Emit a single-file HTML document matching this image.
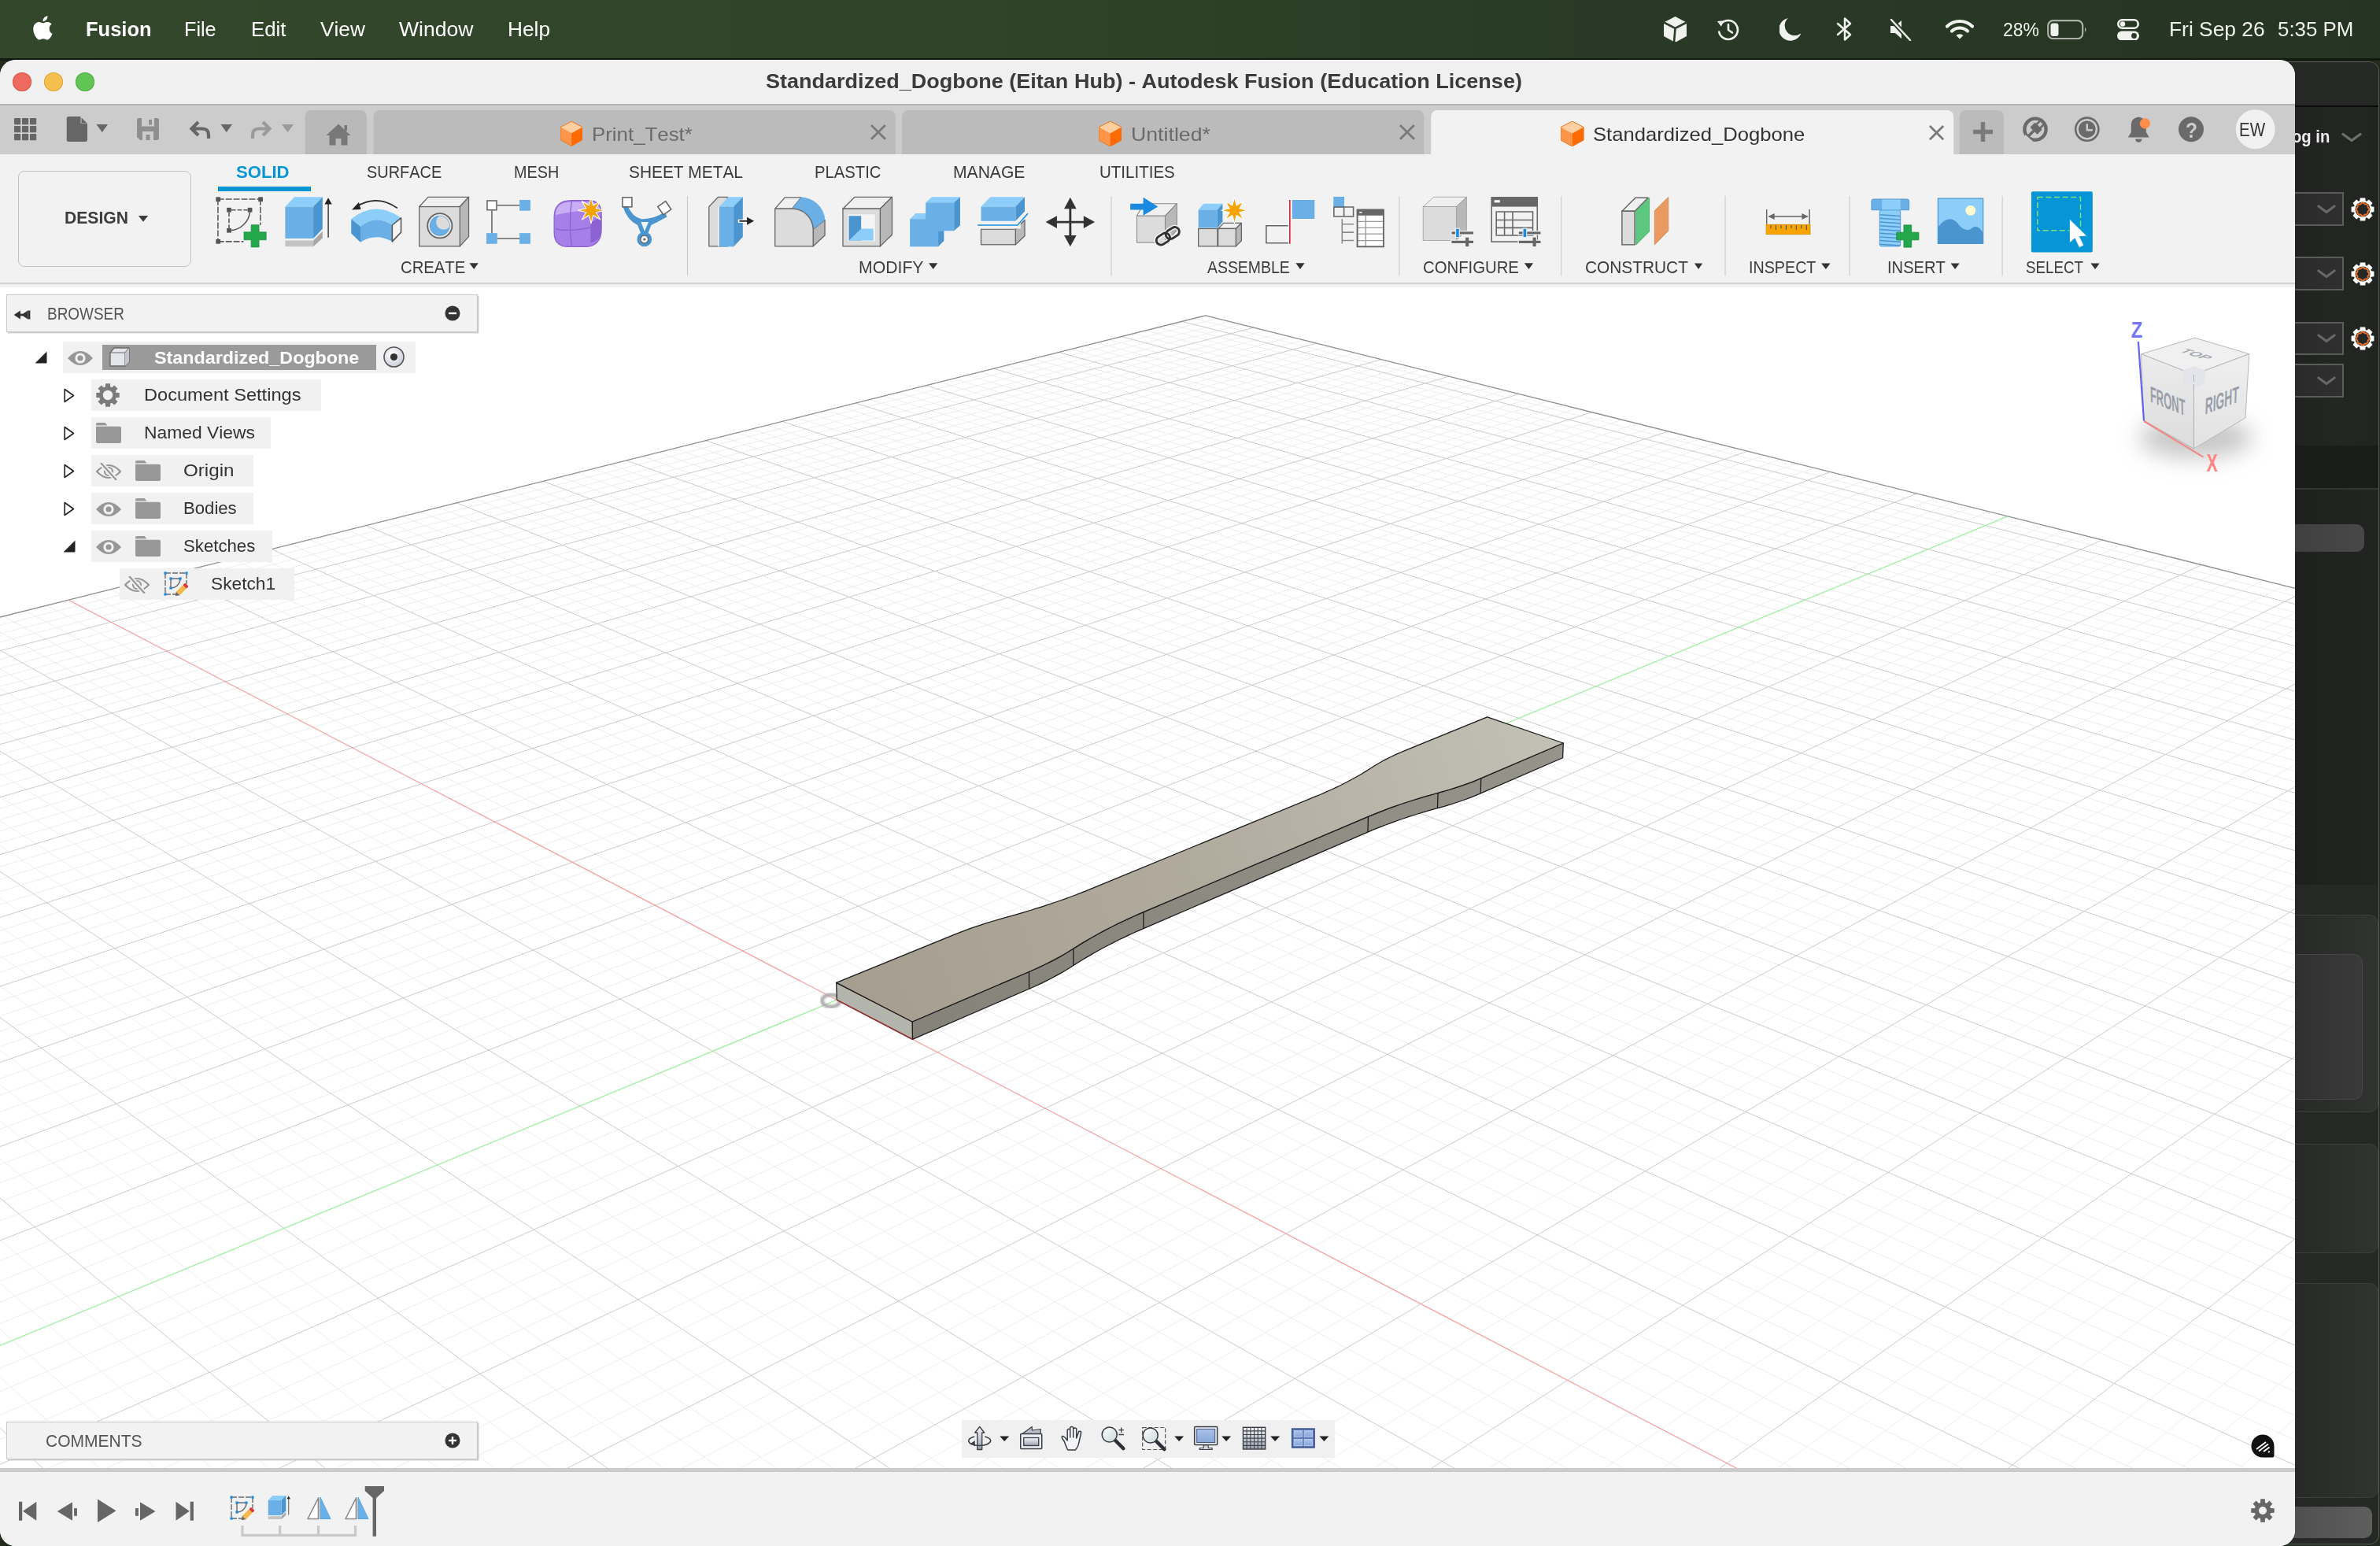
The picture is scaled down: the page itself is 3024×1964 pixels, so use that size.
<!DOCTYPE html><html><head><meta charset="utf-8"><title>Autodesk Fusion</title><style>
html,body{margin:0;padding:0}
body{width:3024px;height:1964px;overflow:hidden;background:#222b1c;position:relative;font-family:"Liberation Sans",sans-serif;font-kerning:none}
.t{position:absolute;white-space:pre;line-height:1;transform-origin:0 0;display:block}
#win{position:absolute;left:0;top:76px;width:2916px;height:1888px;border-radius:20px;overflow:hidden;background:#f2f2f2}
#rp{position:absolute;left:2890px;top:78px;width:133px;height:1884px;border-radius:0 12px 12px 0;overflow:hidden;background:linear-gradient(90deg,#1f211f 0%,#232623 60%,#222422 100%)}
</style></head><body><div class="" style="position:absolute;left:0.00px;top:0.00px;width:3024.00px;height:75.00px;background:linear-gradient(90deg,#33472b 0%,#2f4429 40%,#283a25 68%,#263523 100%)"></div><div class="" style="position:absolute;left:0.00px;top:74.00px;width:3024.00px;height:3.00px;background:#121a10"></div><svg style="position:absolute;left:39.50px;top:19.50px;" width="29.00" height="32.00" viewBox="0 1.5 22.5 29"><path d="M18.7 15.9c0-3.1 2.5-4.6 2.6-4.7-1.4-2.100-3.600-2.400-4.900-2.400-2.100-.2-4.100 1.200-5.100 1.200s-2.700-1.200-4.400-1.200c-2.300 0-4.400 1.300-5.600 3.400-2.400 4.100-.6 10.300 1.700 13.600 1.100 1.600 2.500 3.500 4.300 3.400 1.700-.1 2.400-1.100 4.400-1.100s2.700 1.100 4.500 1.100 3-1.700 4.100-3.300c1.300-1.900 1.800-3.700 1.900-3.800-.1 0-3.500-1.400-3.500-5.200zM15.300 6.100c.9-1.100 1.600-2.700 1.400-4.300-1.300.1-3 .9-4 2-.9 1-1.600 2.600-1.400 4.200 1.500.1 3-.8 4-1.900z" fill="#fff"/></svg><span class="t " style="left:109.00px;top:24.00px;font-size:26.00px;color:#fff;font-weight:700;transform:scaleX(0.9800);">Fusion</span><span class="t " style="left:234.40px;top:24.00px;font-size:26.00px;color:#fff;font-weight:400;transform:scaleX(0.9693);">File</span><span class="t " style="left:319.00px;top:24.00px;font-size:26.00px;color:#fff;font-weight:400;transform:scaleX(0.9911);">Edit</span><span class="t " style="left:406.60px;top:24.00px;font-size:26.00px;color:#fff;font-weight:400;transform:scaleX(1.0080);">View</span><span class="t " style="left:507.00px;top:24.00px;font-size:26.00px;color:#fff;font-weight:400;transform:scaleX(1.0223);">Window</span><span class="t " style="left:645.00px;top:24.00px;font-size:26.00px;color:#fff;font-weight:400;transform:scaleX(1.0097);">Help</span><svg style="position:absolute;left:2113.70px;top:20.60px;" width="29.00" height="32.90" viewBox="0 0 29 33"><path d="M14.5 0L29 7.5V25L14.5 33L0 25V7.5Z" fill="#f0f2ee"/><path d="M14.5 15L29 7.5M14.5 15L0 7.5M14.5 15L13 33" stroke="#2a3b27" stroke-width="2.6" fill="none"/><path d="M14.5 15L29 7.5V25L13.5 32.500Z" fill="#2a3b27" opacity=".0"/></svg><svg style="position:absolute;left:2180.00px;top:23.00px;" width="32.00" height="29.00" viewBox="0 0 32 29"><path d="M6.500 7.500A12 12 0 1 1 4.200 17.500" fill="none" stroke="#f0f2ee" stroke-width="2.6" stroke-linecap="round"/><path d="M1.500 4.500L7.500 10.500L9.500 2.800Z" fill="#f0f2ee" transform="rotate(8 6 7)"/><path d="M16 8V15L21 18.500" fill="none" stroke="#f0f2ee" stroke-width="2.600" stroke-linecap="round" stroke-linejoin="round"/></svg><svg style="position:absolute;left:2260.50px;top:23.00px;" width="27.70" height="28.60" viewBox="0 0 27.7 28.6"><path d="M11 0A14.500 14.500 0 1 0 27.500 19A12.500 12.500 0 0 1 11 0Z" fill="#f0f2ee"/></svg><svg style="position:absolute;left:2332.00px;top:21.00px;" width="24.00" height="32.00" viewBox="0 0 24 32"><path d="M3 9L19 23L12 29.500V2.500L19 9L3 23" fill="none" stroke="#f0f2ee" stroke-width="2.500" stroke-linejoin="round" stroke-linecap="round"/></svg><svg style="position:absolute;left:2400.00px;top:23.00px;" width="30.00" height="29.00" viewBox="0 0 30 29"><path d="M2 10H8L16 3V26L8 19H2Z" fill="#f0f2ee"/><path d="M3 2L27 28" stroke="#2a3b27" stroke-width="6"/><path d="M3 2L27 28" stroke="#f0f2ee" stroke-width="2.400" stroke-linecap="round"/></svg><svg style="position:absolute;left:2472.00px;top:24.00px;" width="36.00" height="26.00" viewBox="0 0 36 26"><path d="M2 9.500A23 23 0 0 1 34 9.500" fill="none" stroke="#f0f2ee" stroke-width="4.200" stroke-linecap="round"/><path d="M8 15.500A14.500 14.500 0 0 1 28 15.500" fill="none" stroke="#f0f2ee" stroke-width="4.200" stroke-linecap="round"/><path d="M13.500 21A6.500 6.500 0 0 1 22.500 21L18 25.600Z" fill="#f0f2ee"/></svg><span class="t " style="left:2544.90px;top:27.00px;font-size:23.50px;color:#f0f2ee;font-weight:400;transform:scaleX(0.9782);">28%</span><svg style="position:absolute;left:2601.00px;top:24.50px;" width="52.00" height="25.50" viewBox="0 0 52 25.500"><rect x="1.200" y="1.200" width="44" height="23" rx="6.500" fill="none" stroke="#a9b1a6" stroke-width="2.200"/><rect x="4.500" y="4.500" width="10" height="16.500" rx="3" fill="#f0f2ee"/><path d="M48 9.500Q51 12.700 48 16Z" fill="#a9b1a6"/></svg><svg style="position:absolute;left:2690.00px;top:23.50px;" width="28.00" height="27.50" viewBox="0 0 28 27.500"><rect x="1.300" y="1.300" width="25.400" height="10.400" rx="5.200" fill="none" stroke="#f0f2ee" stroke-width="2.600"/><circle cx="7" cy="6.500" r="3.200" fill="#f0f2ee"/><rect x="0" y="15.500" width="28" height="12" rx="6" fill="#f0f2ee"/><circle cx="21.500" cy="21.500" r="3.400" fill="#2a3b27"/></svg><span class="t " style="left:2755.50px;top:24.00px;font-size:26.00px;color:#f0f2ee;font-weight:400;transform:scaleX(1.0147);">Fri Sep 26</span><span class="t " style="left:2893.90px;top:24.00px;font-size:26.00px;color:#f0f2ee;font-weight:400;transform:scaleX(0.9956);">5:35 PM</span><div id="rp"><div class="" style="position:absolute;left:0.00px;top:0.00px;width:140.00px;height:57.00px;background:#262826"></div><div class="" style="position:absolute;left:0.00px;top:56.00px;width:140.00px;height:1.60px;background:#0a0a0a"></div><div class="" style="position:absolute;left:0.00px;top:487.70px;width:140.00px;height:55.00px;background:#1b1d1b"></div><div class="" style="position:absolute;left:0.00px;top:542.00px;width:140.00px;height:1.60px;background:#343634"></div><div class="" style="position:absolute;left:0.00px;top:543.60px;width:140.00px;height:502.00px;background:linear-gradient(90deg,#1e201e,#222422)"></div><div class="" style="position:absolute;left:0.00px;top:1045.70px;width:140.00px;height:850.00px;background:#262826"></div><span class="t " style="left:22.10px;top:85.00px;font-size:22.40px;color:#ececec;font-weight:700;transform:scaleX(0.9030);">og in</span><svg style="position:absolute;left:85.00px;top:90.00px;" width="26.00" height="14.00" viewBox="0 0 26 14"><path d="M2 2.500L13 10.500L24 2.500" fill="none" stroke="#6e706e" stroke-width="3.4" stroke-linecap="round" stroke-linejoin="round"/></svg><div class="" style="position:absolute;left:-10.00px;top:166.40px;width:97.60px;height:43.00px;box-sizing:border-box;border:2px solid #5a5c5a;background:linear-gradient(90deg,#262826,#2f2f2f)"></div><svg style="position:absolute;left:54.00px;top:181.90px;" width="24.00" height="13.00" viewBox="0 0 24 13"><path d="M2 2L12 9.500L22 2" fill="none" stroke="#676967" stroke-width="3.2" stroke-linecap="round" stroke-linejoin="round"/></svg><div class="" style="position:absolute;left:-10.00px;top:248.20px;width:97.60px;height:42.80px;box-sizing:border-box;border:2px solid #5a5c5a;background:linear-gradient(90deg,#262826,#2f2f2f)"></div><svg style="position:absolute;left:54.00px;top:263.60px;" width="24.00" height="13.00" viewBox="0 0 24 13"><path d="M2 2L12 9.500L22 2" fill="none" stroke="#676967" stroke-width="3.2" stroke-linecap="round" stroke-linejoin="round"/></svg><div class="" style="position:absolute;left:-10.00px;top:330.50px;width:97.60px;height:42.70px;box-sizing:border-box;border:2px solid #5a5c5a;background:linear-gradient(90deg,#262826,#2f2f2f)"></div><svg style="position:absolute;left:54.00px;top:345.85px;" width="24.00" height="13.00" viewBox="0 0 24 13"><path d="M2 2L12 9.500L22 2" fill="none" stroke="#676967" stroke-width="3.2" stroke-linecap="round" stroke-linejoin="round"/></svg><div class="" style="position:absolute;left:-10.00px;top:384.00px;width:97.60px;height:43.00px;box-sizing:border-box;border:2px solid #5a5c5a;background:linear-gradient(90deg,#262826,#2f2f2f)"></div><svg style="position:absolute;left:54.00px;top:399.50px;" width="24.00" height="13.00" viewBox="0 0 24 13"><path d="M2 2L12 9.500L22 2" fill="none" stroke="#676967" stroke-width="3.2" stroke-linecap="round" stroke-linejoin="round"/></svg><svg style="position:absolute;left:97.00px;top:173.00px;" width="30.00" height="30.00" viewBox="0 0 30 30"><path d="M25.88 11.27L29.44 11.77L29.44 18.23L25.88 18.73L25.33 20.06L27.50 22.93L22.93 27.50L20.06 25.33L18.73 25.88L18.23 29.44L11.77 29.44L11.27 25.88L9.94 25.33L7.07 27.50L2.50 22.93L4.67 20.06L4.12 18.73L0.56 18.23L0.56 11.77L4.12 11.27L4.67 9.94L2.50 7.07L7.07 2.50L9.94 4.67L11.27 4.12L11.77 0.56L18.23 0.56L18.73 4.12L20.06 4.67L22.93 2.50L27.50 7.07L25.33 9.94Z" fill="#fff" stroke="none" stroke-width="0" /><circle cx="15" cy="15" r="9.6" fill="#262826" stroke="none" stroke-width="0" /><path d="M21.88 12.87L23.04 13.37L23.04 16.63L21.88 17.13L21.37 18.36L21.83 19.53L19.53 21.83L18.36 21.37L17.13 21.88L16.63 23.04L13.37 23.04L12.87 21.88L11.64 21.37L10.47 21.83L8.17 19.53L8.63 18.36L8.12 17.13L6.96 16.63L6.96 13.37L8.12 12.87L8.63 11.64L8.17 10.47L10.47 8.17L11.64 8.63L12.87 8.12L13.37 6.96L16.63 6.96L17.13 8.12L18.36 8.63L19.53 8.17L21.83 10.47L21.37 11.64Z" fill="none" stroke="#e87028" stroke-width="1.8" stroke-linejoin="round"/></svg><svg style="position:absolute;left:97.00px;top:254.60px;" width="30.00" height="30.00" viewBox="0 0 30 30"><path d="M25.88 11.27L29.44 11.77L29.44 18.23L25.88 18.73L25.33 20.06L27.50 22.93L22.93 27.50L20.06 25.33L18.73 25.88L18.23 29.44L11.77 29.44L11.27 25.88L9.94 25.33L7.07 27.50L2.50 22.93L4.67 20.06L4.12 18.73L0.56 18.23L0.56 11.77L4.12 11.27L4.67 9.94L2.50 7.07L7.07 2.50L9.94 4.67L11.27 4.12L11.77 0.56L18.23 0.56L18.73 4.12L20.06 4.67L22.93 2.50L27.50 7.07L25.33 9.94Z" fill="#fff" stroke="none" stroke-width="0" /><circle cx="15" cy="15" r="9.6" fill="#262826" stroke="none" stroke-width="0" /><path d="M21.88 12.87L23.04 13.37L23.04 16.63L21.88 17.13L21.37 18.36L21.83 19.53L19.53 21.83L18.36 21.37L17.13 21.88L16.63 23.04L13.37 23.04L12.87 21.88L11.64 21.37L10.47 21.83L8.17 19.53L8.63 18.36L8.12 17.13L6.96 16.63L6.96 13.37L8.12 12.87L8.63 11.64L8.17 10.47L10.47 8.17L11.64 8.63L12.87 8.12L13.37 6.96L16.63 6.96L17.13 8.12L18.36 8.63L19.53 8.17L21.83 10.47L21.37 11.64Z" fill="none" stroke="#e87028" stroke-width="1.8" stroke-linejoin="round"/></svg><svg style="position:absolute;left:97.00px;top:336.50px;" width="30.00" height="30.00" viewBox="0 0 30 30"><path d="M25.88 11.27L29.44 11.77L29.44 18.23L25.88 18.73L25.33 20.06L27.50 22.93L22.93 27.50L20.06 25.33L18.73 25.88L18.23 29.44L11.77 29.44L11.27 25.88L9.94 25.33L7.07 27.50L2.50 22.93L4.67 20.06L4.12 18.73L0.56 18.23L0.56 11.77L4.12 11.27L4.67 9.94L2.50 7.07L7.07 2.50L9.94 4.67L11.27 4.12L11.77 0.56L18.23 0.56L18.73 4.12L20.06 4.67L22.93 2.50L27.50 7.07L25.33 9.94Z" fill="#fff" stroke="none" stroke-width="0" /><circle cx="15" cy="15" r="9.6" fill="#262826" stroke="none" stroke-width="0" /><path d="M21.88 12.87L23.04 13.37L23.04 16.63L21.88 17.13L21.37 18.36L21.83 19.53L19.53 21.83L18.36 21.37L17.13 21.88L16.63 23.04L13.37 23.04L12.87 21.88L11.64 21.37L10.47 21.83L8.17 19.53L8.63 18.36L8.12 17.13L6.96 16.63L6.96 13.37L8.12 12.87L8.63 11.64L8.17 10.47L10.47 8.17L11.64 8.63L12.87 8.12L13.37 6.96L16.63 6.96L17.13 8.12L18.36 8.63L19.53 8.17L21.83 10.47L21.37 11.64Z" fill="none" stroke="#e87028" stroke-width="1.8" stroke-linejoin="round"/></svg><div class="" style="position:absolute;left:-10.00px;top:588.00px;width:124.00px;height:34.50px;border-radius:10px;background:linear-gradient(90deg,#3c3c3c,#484848)"></div><div class="" style="position:absolute;left:-20.00px;top:1083.80px;width:152.40px;height:251.20px;box-sizing:border-box;border:1.500px solid #3c3e3c;border-radius:11px;background:linear-gradient(90deg,#242624,#313331)"></div><div class="" style="position:absolute;left:-20.00px;top:1134.20px;width:131.70px;height:185.30px;box-sizing:border-box;border:1.500px solid #454645;border-radius:11px;background:linear-gradient(90deg,#2a2b2a,#3a3a3a)"></div><div class="" style="position:absolute;left:-20.00px;top:1374.50px;width:152.40px;height:139.50px;box-sizing:border-box;border:1.500px solid #3c3e3c;border-radius:11px;background:linear-gradient(90deg,#242624,#313331)"></div><div class="" style="position:absolute;left:-20.00px;top:1551.90px;width:152.40px;height:273.50px;box-sizing:border-box;border:1.500px solid #3c3e3c;border-radius:11px;background:linear-gradient(90deg,#242624,#313331)"></div><div class="" style="position:absolute;left:-10.00px;top:1836.00px;width:133.80px;height:39.70px;border-radius:10px;background:linear-gradient(90deg,#4a4a4a,#5e5e5e)"></div><div style="position:absolute;left:0;top:0;width:133px;height:1884px;box-sizing:border-box;border:1.600px solid #585a58;border-left:none;border-radius:0 12px 12px 0"></div></div><div id="win"><div class="" style="position:absolute;left:0.00px;top:0.00px;width:2916.00px;height:57.00px;background:#f0f0f0"></div><div class="" style="position:absolute;left:0.00px;top:56.00px;width:2916.00px;height:2.00px;background:#b4b4b4"></div><div class="" style="position:absolute;left:16.00px;top:16.00px;width:24.00px;height:24.00px;border-radius:50%;background:#ec6a5e;box-shadow:inset 0 0 0 1px #d9584c"></div><div class="" style="position:absolute;left:56.00px;top:16.00px;width:24.00px;height:24.00px;border-radius:50%;background:#f4bf4f;box-shadow:inset 0 0 0 1px #dba73a"></div><div class="" style="position:absolute;left:96.00px;top:16.00px;width:24.00px;height:24.00px;border-radius:50%;background:#61c554;box-shadow:inset 0 0 0 1px #4dae3f"></div><span class="t " style="left:972.70px;top:14.00px;font-size:26.00px;color:#3b3b3b;font-weight:700;transform:scaleX(1.0394);">Standardized_Dogbone (Eitan Hub) - Autodesk Fusion (Education License)</span><div class="" style="position:absolute;left:0.00px;top:58.00px;width:2916.00px;height:62.00px;background:#cccccc"></div><svg style="position:absolute;left:0.00px;top:58.00px;" width="2916.00" height="62.00" viewBox="0 134 2916 62"><rect x="18" y="150" width="8.2" height="8.2" rx="1" fill="#666" stroke="none" stroke-width="0" /><rect x="28" y="150" width="8.2" height="8.2" rx="1" fill="#666" stroke="none" stroke-width="0" /><rect x="38" y="150" width="8.2" height="8.2" rx="1" fill="#666" stroke="none" stroke-width="0" /><rect x="18" y="160" width="8.2" height="8.2" rx="1" fill="#666" stroke="none" stroke-width="0" /><rect x="28" y="160" width="8.2" height="8.2" rx="1" fill="#666" stroke="none" stroke-width="0" /><rect x="38" y="160" width="8.2" height="8.2" rx="1" fill="#666" stroke="none" stroke-width="0" /><rect x="18" y="170" width="8.2" height="8.2" rx="1" fill="#666" stroke="none" stroke-width="0" /><rect x="28" y="170" width="8.2" height="8.2" rx="1" fill="#666" stroke="none" stroke-width="0" /><rect x="38" y="170" width="8.2" height="8.2" rx="1" fill="#666" stroke="none" stroke-width="0" /><path d="M87 148H102L111 157V177.500Q111 180 108.500 180H87Q84.700 180 84.700 177.500V150.500Q84.700 148 87 148Z" fill="#666" stroke="none" stroke-width="0" /><path d="M102.500 148L111 156.500H102.500Z" fill="#ccc" stroke="none" stroke-width="0" /><path d="M103.500 149.500V156H110Z" fill="#666" stroke="none" stroke-width="0" /><polygon points="122.5,158 137,158 129.75,168" fill="#666" stroke="none" stroke-width="0" /><path d="M176 150H199Q202 150 202 153V175Q202 178 199 178H178L174 174V152Q174 150 176 150Z" fill="#8f8f8f" stroke="none" stroke-width="0" /><rect x="180" y="150" width="16" height="10.5" rx="0" fill="#ccc" stroke="none" stroke-width="0" /><rect x="189" y="152" width="4" height="6.5" rx="0" fill="#8f8f8f" stroke="none" stroke-width="0" /><rect x="181" y="167" width="14" height="11" rx="0" fill="#ccc" stroke="none" stroke-width="0" /><rect x="185.5" y="171" width="5" height="7" rx="0" fill="#8f8f8f" stroke="none" stroke-width="0" /><path d="M252 155L243.500 163.500L252 172M244 163.500H257Q265 163.500 265 171.500V176" fill="none" stroke="#666" stroke-width="4.2" stroke-linejoin="miter"/><polygon points="280.5,158 295,158 287.75,168" fill="#666" stroke="none" stroke-width="0" /><path d="M334 155L342.500 163.500L334 172M342 163.500H329Q321 163.500 321 171.500V176" fill="none" stroke="#9a9a9a" stroke-width="4.2" /><polygon points="358,158 373,158 365.5,168" fill="#9a9a9a" stroke="none" stroke-width="0" /><path d="M387.600 196V149Q387.600 140 396.600 140H457Q466 140 466 149V196Z" fill="#b9b9b9" stroke="none" stroke-width="0" /><path d="M430 157.500L445.500 172H441.500V184.500H433.500V176H426.500V184.500H418.500V172H414.500Z" fill="#787878" stroke="none" stroke-width="0" /><rect x="437.5" y="159" width="3.5" height="7" rx="0" fill="#787878" stroke="none" stroke-width="0" /><path d="M474.6 196V149Q474.6 140 483.6 140H1128.8Q1137.8 140 1137.8 149V196Z" fill="#bbbbbb" stroke="none" stroke-width="0" /><path d="M1146.1 196V149Q1146.1 140 1155.1 140H1800.3Q1809.3 140 1809.3 149V196Z" fill="#bbbbbb" stroke="none" stroke-width="0" /><path d="M1818.2 196V149Q1818.2 140 1827.2 140H2473.2Q2482.2 140 2482.2 149V196Z" fill="#f2f2f2" stroke="none" stroke-width="0" /><path d="M2489.8 196V149Q2489.8 140 2498.8 140H2537Q2546 140 2546 149V196Z" fill="#bbbbbb" stroke="none" stroke-width="0" /><path d="M2519.500 155V180M2507 167.500H2532" fill="none" stroke="#7a7a7a" stroke-width="5.4" /><circle cx="2586" cy="164.2" r="13.6" fill="none" stroke="#6a6a6a" stroke-width="4.4" /><g transform="translate(2586,164.2) rotate(45)"><rect x="-6.5" y="-6" width="13" height="9" rx="1.5" fill="#6a6a6a" stroke="none" stroke-width="0" /><rect x="-4.6" y="-11" width="2.6" height="6" rx="0" fill="#6a6a6a" stroke="none" stroke-width="0" /><rect x="2" y="-11" width="2.6" height="6" rx="0" fill="#6a6a6a" stroke="none" stroke-width="0" /><rect x="-1.8" y="3" width="3.6" height="9" rx="0" fill="#6a6a6a" stroke="none" stroke-width="0" /></g><path d="M2572 173.2L2581 181.2" fill="none" stroke="#ccc" stroke-width="5" /><circle cx="2651.8" cy="164.2" r="14.6" fill="none" stroke="#6a6a6a" stroke-width="2.6" /><circle cx="2651.8" cy="164.2" r="10.8" fill="#6a6a6a" stroke="none" stroke-width="0" /><path d="M2651.8 157.2V165.2H2658.8" fill="none" stroke="#ccc" stroke-width="2.4" /><path d="M2717.3 148.500Q2707.8 150 2707.8 158V168L2703.8 174.500H2730.8L2726.8 168V158Q2726.8 150 2717.3 148.500Z" fill="#6a6a6a" stroke="none" stroke-width="0" /><path d="M2713.1 176.500A4.200 4.200 0 0 0 2721.5 176.500Z" fill="#6a6a6a" stroke="none" stroke-width="0" /><circle cx="2725.4" cy="156.8" r="6.6" fill="#ff8c4a" stroke="none" stroke-width="0" /><circle cx="2784" cy="164.2" r="16" fill="#6a6a6a" stroke="none" stroke-width="0" /><circle cx="2865.7" cy="164.2" r="25" fill="#f1f1f1" stroke="none" stroke-width="0" /></svg><span class="t " style="left:2776.50px;top:76.00px;font-size:28.00px;color:#ccc;font-weight:700;transform:scaleX(0.8768);">?</span><span class="t " style="left:2844.90px;top:77.00px;font-size:24.00px;color:#333;font-weight:400;transform:scaleX(0.8561);">EW</span><svg style="position:absolute;left:711.80px;top:78.40px;" width="28.30" height="31.60" viewBox="0 0 29 32"><path d="M14.500 0L29 7.500L14.500 15.500L0 7.500Z" fill="#ffcf9f"/><path d="M0 7.500L14.500 15.500V32L0 24Z" fill="#ff9548"/><path d="M29 7.500L14.500 15.500V32L29 24Z" fill="#ff6a00"/><path d="M14.500 0L29 7.500V24L14.500 32L0 24V7.500Z" fill="none" stroke="#e8761e" stroke-width="1"/></svg><span class="t " style="left:752.10px;top:83.00px;font-size:24.30px;color:#6a6a6a;font-weight:400;transform:scaleX(1.0639);">Print_Test*</span><svg style="position:absolute;left:1104.70px;top:81.40px;" width="21.80" height="21.80" viewBox="0 0 21.8 21.8"><path d="M2 2L19.8 19.8M19.8 2L2 19.8" stroke="#7a7a7a" stroke-width="2.800" fill="none"/></svg><svg style="position:absolute;left:1395.50px;top:78.00px;" width="29.20" height="32.00" viewBox="0 0 29 32"><path d="M14.500 0L29 7.500L14.500 15.500L0 7.500Z" fill="#ffcf9f"/><path d="M0 7.500L14.500 15.500V32L0 24Z" fill="#ff9548"/><path d="M29 7.500L14.500 15.500V32L29 24Z" fill="#ff6a00"/><path d="M14.500 0L29 7.500V24L14.500 32L0 24V7.500Z" fill="none" stroke="#e8761e" stroke-width="1"/></svg><span class="t " style="left:1436.50px;top:83.00px;font-size:24.30px;color:#6a6a6a;font-weight:400;transform:scaleX(1.0985);">Untitled*</span><svg style="position:absolute;left:1776.80px;top:81.40px;" width="21.80" height="21.80" viewBox="0 0 21.8 21.8"><path d="M2 2L19.8 19.8M19.8 2L2 19.8" stroke="#7a7a7a" stroke-width="2.800" fill="none"/></svg><svg style="position:absolute;left:1983.40px;top:78.00px;" width="29.20" height="32.00" viewBox="0 0 29 32"><path d="M14.500 0L29 7.500L14.500 15.500L0 7.500Z" fill="#ffcf9f"/><path d="M0 7.500L14.500 15.500V32L0 24Z" fill="#ff9548"/><path d="M29 7.500L14.500 15.500V32L29 24Z" fill="#ff6a00"/><path d="M14.500 0L29 7.500V24L14.500 32L0 24V7.500Z" fill="none" stroke="#e8761e" stroke-width="1"/></svg><span class="t " style="left:2024.00px;top:83.00px;font-size:24.30px;color:#333;font-weight:400;transform:scaleX(1.0550);">Standardized_Dogbone</span><svg style="position:absolute;left:2449.50px;top:81.90px;" width="21.20" height="21.20" viewBox="0 0 21.2 21.2"><path d="M2 2L19.2 19.2M19.2 2L2 19.2" stroke="#7a7a7a" stroke-width="2.800" fill="none"/></svg><div class="" style="position:absolute;left:0.00px;top:120.00px;width:2916.00px;height:164.00px;background:#f2f2f2"></div><div class="" style="position:absolute;left:0.00px;top:283.00px;width:2916.00px;height:1.50px;background:#d2d2d2"></div><div class="" style="position:absolute;left:0.00px;top:284.50px;width:2916.00px;height:5.30px;background:#f0f0f0"></div><div class="" style="position:absolute;left:23.30px;top:141.40px;width:219.30px;height:121.20px;box-sizing:border-box;border:1.600px solid #c2c2c2;border-radius:8px;background:#f2f2f2"></div><span class="t " style="left:82.40px;top:190.00px;font-size:22.50px;color:#3c3c3c;font-weight:700;transform:scaleX(0.9378);">DESIGN</span><span class="t " style="left:300.00px;top:132.00px;font-size:22.50px;color:#0696d7;font-weight:700;transform:scaleX(0.9831);">SOLID</span><span class="t " style="left:466.30px;top:132.00px;font-size:22.50px;color:#3a3a3a;font-weight:400;transform:scaleX(0.8855);">SURFACE</span><span class="t " style="left:652.50px;top:132.00px;font-size:22.50px;color:#3a3a3a;font-weight:400;transform:scaleX(0.8800);">MESH</span><span class="t " style="left:798.60px;top:132.00px;font-size:22.50px;color:#3a3a3a;font-weight:400;transform:scaleX(0.9273);">SHEET METAL</span><span class="t " style="left:1035.00px;top:132.00px;font-size:22.50px;color:#3a3a3a;font-weight:400;transform:scaleX(0.9000);">PLASTIC</span><span class="t " style="left:1211.00px;top:132.00px;font-size:22.50px;color:#3a3a3a;font-weight:400;transform:scaleX(0.9373);">MANAGE</span><span class="t " style="left:1397.00px;top:132.00px;font-size:22.50px;color:#3a3a3a;font-weight:400;transform:scaleX(0.9121);">UTILITIES</span><div class="" style="position:absolute;left:277.00px;top:161.00px;width:118.00px;height:6.30px;background:#0696d7"></div><span class="t " style="left:508.80px;top:254.00px;font-size:21.50px;color:#3c3c3c;font-weight:400;transform:scaleX(0.9426);">CREATE</span><span class="t " style="left:1090.50px;top:254.00px;font-size:21.50px;color:#3c3c3c;font-weight:400;transform:scaleX(0.9867);">MODIFY</span><span class="t " style="left:1533.90px;top:254.00px;font-size:21.50px;color:#3c3c3c;font-weight:400;transform:scaleX(0.9033);">ASSEMBLE</span><span class="t " style="left:1807.90px;top:254.00px;font-size:21.50px;color:#3c3c3c;font-weight:400;transform:scaleX(0.9450);">CONFIGURE</span><span class="t " style="left:2014.10px;top:254.00px;font-size:21.50px;color:#3c3c3c;font-weight:400;transform:scaleX(0.9699);">CONSTRUCT</span><span class="t " style="left:2222.00px;top:254.00px;font-size:21.50px;color:#3c3c3c;font-weight:400;transform:scaleX(0.9165);">INSPECT</span><span class="t " style="left:2398.00px;top:254.00px;font-size:21.50px;color:#3c3c3c;font-weight:400;transform:scaleX(0.9369);">INSERT</span><span class="t " style="left:2573.50px;top:254.00px;font-size:21.50px;color:#3c3c3c;font-weight:400;transform:scaleX(0.8728);">SELECT</span><svg style="position:absolute;left:0.00px;top:120.00px;" width="2916.00" height="170.00" viewBox="0 196 2916 170"><g transform="translate(260,230) scale(0.260505)"><path d="M65 88H272M65 88V295M272 88V215M65 295H190" fill="none" stroke="#5a5a5a" stroke-width="6" stroke-dasharray="30 8"/><rect x="55" y="78" width="22" height="22" rx="0" fill="#555" stroke="none" stroke-width="0" /><rect x="262" y="78" width="22" height="22" rx="0" fill="#555" stroke="none" stroke-width="0" /><rect x="55" y="284" width="22" height="22" rx="0" fill="#555" stroke="none" stroke-width="0" /><path d="M130 141H210M119 152V230" fill="none" stroke="#5a5a5a" stroke-width="6" stroke-dasharray="22 8"/><path d="M221 150A102 102 0 0 1 128 241" fill="none" stroke="#5a5a5a" stroke-width="6" /><rect x="108" y="130" width="22" height="22" rx="0" fill="#555" stroke="none" stroke-width="0" /><rect x="210" y="130" width="22" height="22" rx="0" fill="#555" stroke="none" stroke-width="0" /><rect x="108" y="230" width="22" height="22" rx="0" fill="#555" stroke="none" stroke-width="0" /><polygon points="227,214 265,214 265,249 300,249 300,287 265,287 265,322 227,322 227,287 192,287 192,249 227,249" fill="#22a84a" stroke="#1d8f3e" stroke-width="3" /><polygon points="393,290 530,290 530,320 393,320" fill="#c4c4c4" stroke="none" stroke-width="0" /><polygon points="530,290 575,245 575,278 530,320" fill="#a8a8a8" stroke="none" stroke-width="0" /><polygon points="393,125 438,78 575,78 530,125" fill="#8ccdfa" stroke="none" stroke-width="0" /><polygon points="530,125 575,78 575,233 530,280" fill="#4a95cf" stroke="none" stroke-width="0" /><rect x="393" y="125" width="137" height="155" rx="0" fill="#6ab0e6" stroke="none" stroke-width="0" /><line x1="603" y1="275" x2="603" y2="105" stroke="#222" stroke-width="5" /><polygon points="585,113 603,82 621,113" fill="#222" stroke="none" stroke-width="0" /><path d="M940 132Q840 62 738 126" fill="none" stroke="#222" stroke-width="6" /><polygon points="718,140 752,104 762,138" fill="#222" stroke="none" stroke-width="0" /><path d="M715 185Q835 90 958 180L915 215Q835 160 760 222Z" fill="#8ccdfa" stroke="none" stroke-width="0" /><path d="M760 222Q835 160 915 215L915 295Q835 250 760 298Z" fill="#6ab0e6" stroke="none" stroke-width="0" /><polygon points="715,185 760,222 760,298 715,255" fill="#4a95cf" stroke="none" stroke-width="0" /><polygon points="915,215 958,180 958,250 915,295" fill="#f4f4f4" stroke="#555" stroke-width="6" stroke-linejoin="round"/><polygon points="1047,125 1090,78 1288,78 1245,125" fill="#f0f0f0" stroke="#666" stroke-width="5" stroke-linejoin="round"/><polygon points="1245,125 1288,78 1288,271 1245,318" fill="#b8b8b8" stroke="#666" stroke-width="5" stroke-linejoin="round"/><rect x="1047" y="125" width="198" height="193" rx="0" fill="#dcdcdc" stroke="#666" stroke-width="5" /><circle cx="1147" cy="218" r="60" fill="#e6e6e6" stroke="#666" stroke-width="7" /><circle cx="1147" cy="218" r="48" fill="#6ab0e6" stroke="#4a95cf" stroke-width="3" /><clipPath id="hc"><circle cx="1147" cy="218" r="47"/></clipPath><circle cx="1166" cy="200" r="37" fill="#dcdcdc" stroke="none" stroke-width="0" clip-path="url(#hc)"/><path d="M1427 118H1537M1401 143V255M1427 280H1537" fill="none" stroke="#666" stroke-width="6" /><rect x="1378" y="96" width="46" height="45" rx="0" fill="#fff" stroke="#666" stroke-width="6" /><rect x="1537" y="93" width="51" height="50" rx="0" fill="#6ab0e6" stroke="#5aa5de" stroke-width="2" /><rect x="1375" y="255" width="51" height="50" rx="0" fill="#6ab0e6" stroke="#5aa5de" stroke-width="2" /><rect x="1537" y="255" width="51" height="50" rx="0" fill="#6ab0e6" stroke="#5aa5de" stroke-width="2" /><path d="M1705 175Q1705 95 1790 95L1870 95Q1935 95 1935 160L1935 235Q1935 320 1850 320L1775 320Q1705 320 1705 250Z" fill="#a77fe8" stroke="#8c62d2" stroke-width="5" /><path d="M1712 165Q1712 102 1790 102L1870 102Q1928 102 1928 150Q1850 135 1712 165Z" fill="#c9aef5" stroke="none" stroke-width="0" /><path d="M1712 235Q1800 250 1925 215M1790 100Q1775 200 1790 315M1885 200V300" fill="none" stroke="#8c62d2" stroke-width="5" /><path d="M1885 200Q1935 180 1935 160L1935 235Q1935 290 1885 300Z" fill="#8c62d2" stroke="none" stroke-width="0" /><polygon points="1885,79 1894.95,118.979 1930.25,97.7452 1909.02,133.05 1949,143 1909.02,152.95 1930.25,188.255 1894.95,167.021 1885,207 1875.05,167.021 1839.75,188.255 1860.98,152.95 1821,143 1860.98,133.05 1839.75,97.7452 1875.05,118.979" fill="#f7a400" stroke="#fff" stroke-width="4" stroke-linejoin="round"/><path d="M2062 118Q2085 175 2130 185Q2190 188 2245 150L2255 175Q2200 205 2178 215L2160 262H2130L2112 215Q2060 190 2040 125Z" fill="#4a95cf" stroke="none" stroke-width="0" /><polygon points="2128,200 2165,200 2146,245" fill="#f2f2f2" stroke="none" stroke-width="0" /><circle cx="2145" cy="284" r="36" fill="#4a95cf" stroke="none" stroke-width="0" /><circle cx="2145" cy="284" r="19" fill="#f2f2f2" stroke="#666" stroke-width="5" /><circle cx="2145" cy="284" r="6" fill="#666" stroke="none" stroke-width="0" /><rect x="2038" y="80" width="46" height="46" rx="0" fill="#fff" stroke="#666" stroke-width="6" /><polygon points="2210,125 2248,98 2276,138 2238,165" fill="#fff" stroke="#666" stroke-width="6" stroke-linejoin="round"/><line x1="2355" y1="75" x2="2355" y2="462" stroke="#c8c8c8" stroke-width="4" /><polygon points="1292,400 1335,400 1313.5,430" fill="#333" stroke="none" stroke-width="0" /></g><g transform="translate(880,230) scale(0.260505)"><polygon points="80,125 125,78 170,78 170,318 80,318" fill="#dcdcdc" stroke="#666" stroke-width="5" stroke-linejoin="round"/><polygon points="130,125 175,78 245,78 200,125" fill="#8ccdfa" stroke="none" stroke-width="0" /><polygon points="200,125 245,78 245,273 200,320" fill="#4a95cf" stroke="none" stroke-width="0" /><rect x="130" y="125" width="70" height="195" rx="0" fill="#6ab0e6" stroke="none" stroke-width="0" /><line x1="126" y1="128" x2="126" y2="320" stroke="#f2f2f2" stroke-width="5" /><line x1="222" y1="195" x2="272" y2="195" stroke="#fff" stroke-width="16" /><line x1="228" y1="195" x2="272" y2="195" stroke="#222" stroke-width="7" /><polygon points="265,176 300,195 265,214" fill="#222" stroke="none" stroke-width="0" /><polygon points="402,135 450,80 530,80 485,135" fill="#f0f0f0" stroke="#666" stroke-width="5" stroke-linejoin="round"/><polygon points="588,235 645,190 645,265 588,318" fill="#b8b8b8" stroke="#666" stroke-width="5" stroke-linejoin="round"/><path d="M485 135L530 80A118 118 0 0 1 645 190L588 235A102 102 0 0 0 485 135Z" fill="#6ab0e6" stroke="#5aa5de" stroke-width="2" /><path d="M402 135L485 135A102 102 0 0 1 588 235L588 318L402 318Z" fill="#dcdcdc" stroke="#666" stroke-width="5" stroke-linejoin="round"/><polygon points="733,135 791,78 973,78 915,135" fill="#f0f0f0" stroke="#666" stroke-width="5" stroke-linejoin="round"/><polygon points="915,135 973,78 973,261 915,318" fill="#b8b8b8" stroke="#666" stroke-width="5" stroke-linejoin="round"/><rect x="733" y="135" width="182" height="183" rx="0" fill="#dcdcdc" stroke="#666" stroke-width="5" /><rect x="757" y="162" width="133" height="131" rx="0" fill="#f4f4f4" stroke="none" stroke-width="0" /><rect x="762" y="170" width="60" height="120" rx="0" fill="#4a95cf" stroke="none" stroke-width="0" /><polygon points="762,290 822,232 882,232 882,290" fill="#8ccdfa" stroke="none" stroke-width="0" /><polygon points="1137,105 1167,78 1305,78 1275,105" fill="#8ccdfa" stroke="none" stroke-width="0" /><polygon points="1275,105 1305,78 1305,216 1275,243" fill="#4a95cf" stroke="none" stroke-width="0" /><rect x="1137" y="105" width="138" height="138" rx="0" fill="#6ab0e6" stroke="none" stroke-width="0" /><polygon points="1060,185 1088,157 1137,157 1137,185" fill="#8ccdfa" stroke="none" stroke-width="0" /><rect x="1060" y="185" width="138" height="135" rx="0" fill="#6ab0e6" stroke="none" stroke-width="0" /><polygon points="1198,243 1226,243 1226,292 1198,320" fill="#4a95cf" stroke="none" stroke-width="0" /><rect x="1137" y="157" width="61" height="86" rx="0" fill="#6ab0e6" stroke="none" stroke-width="0" /><polygon points="1575,235 1620,190 1620,268 1575,310" fill="#b8b8b8" stroke="#666" stroke-width="5" stroke-linejoin="round"/><rect x="1407" y="235" width="168" height="75" rx="0" fill="#dcdcdc" stroke="#666" stroke-width="5" /><rect x="1400" y="200" width="200" height="32" rx="0" fill="#f2f2f2" stroke="none" stroke-width="0" /><polygon points="1407,125 1452,78 1620,78 1575,125" fill="#8ccdfa" stroke="none" stroke-width="0" /><polygon points="1575,125 1620,78 1620,148 1575,195" fill="#4a95cf" stroke="none" stroke-width="0" /><rect x="1407" y="125" width="168" height="70" rx="0" fill="#6ab0e6" stroke="none" stroke-width="0" /><path d="M1390 215H1585L1635 158" fill="none" stroke="#1a8ae0" stroke-width="6" /><line x1="1775" y1="200" x2="1909" y2="200" stroke="#333" stroke-width="11" /><line x1="1842" y1="133" x2="1842" y2="267" stroke="#333" stroke-width="11" /><polygon points="1722,200 1777,170 1777,230" fill="#333" stroke="none" stroke-width="0" /><polygon points="1962,200 1907,170 1907,230" fill="#333" stroke="none" stroke-width="0" /><polygon points="1842,80 1812,135 1872,135" fill="#333" stroke="none" stroke-width="0" /><polygon points="1842,320 1812,265 1872,265" fill="#333" stroke="none" stroke-width="0" /><line x1="2042" y1="75" x2="2042" y2="462" stroke="#c8c8c8" stroke-width="4" /><polygon points="2167,170 2200,110 2362,110 2305,170" fill="#f0f0f0" stroke="#888" stroke-width="4" stroke-linejoin="round"/><polygon points="2305,170 2362,110 2362,240 2305,300" fill="#b8b8b8" stroke="#888" stroke-width="4" stroke-linejoin="round"/><rect x="2167" y="170" width="138" height="130" rx="0" fill="#dcdcdc" stroke="#888" stroke-width="4" /><polygon points="2135,110 2198,110 2198,80 2270,125 2198,168 2198,140 2135,140" fill="#1a8ae0" stroke="none" stroke-width="0" /><g transform="translate(2318,268) rotate(-32)"><rect x="-62" y="-22" width="70" height="44" rx="22" fill="none" stroke="#f2f2f2" stroke-width="22" /><rect x="-8" y="-22" width="70" height="44" rx="22" fill="none" stroke="#f2f2f2" stroke-width="22" /><rect x="-62" y="-22" width="70" height="44" rx="22" fill="none" stroke="#333" stroke-width="11" /><rect x="-8" y="-22" width="70" height="44" rx="22" fill="none" stroke="#333" stroke-width="11" /></g><polygon points="1152,400 1195,400 1173.5,430" fill="#333" stroke="none" stroke-width="0" /></g><g transform="translate(1500,230) scale(0.260505)"><rect x="87" y="232" width="93" height="86" rx="0" fill="#dcdcdc" stroke="#666" stroke-width="5" /><polygon points="183,232 210,205 297,205 270,232" fill="#f0f0f0" stroke="#666" stroke-width="5" stroke-linejoin="round"/><polygon points="270,232 297,205 297,291 270,318" fill="#b8b8b8" stroke="#666" stroke-width="5" stroke-linejoin="round"/><rect x="183" y="232" width="87" height="86" rx="0" fill="#dcdcdc" stroke="#666" stroke-width="5" /><polygon points="87,140 112,110 205,110 180,140" fill="#8ccdfa" stroke="none" stroke-width="0" /><polygon points="180,140 205,110 205,198 180,228" fill="#4a95cf" stroke="none" stroke-width="0" /><rect x="87" y="140" width="93" height="88" rx="0" fill="#6ab0e6" stroke="none" stroke-width="0" /><polygon points="263,79 272.95,118.979 308.255,97.7452 287.021,133.05 327,143 287.021,152.95 308.255,188.255 272.95,167.021 263,207 253.05,167.021 217.745,188.255 238.979,152.95 199,143 238.979,133.05 217.745,97.7452 253.05,118.979" fill="#f7a400" stroke="#fff" stroke-width="4" stroke-linejoin="round"/><path d="M525 218H418V302H525" fill="none" stroke="#666" stroke-width="6" /><rect x="546" y="94" width="106" height="88" rx="0" fill="#6ab0e6" stroke="#5aa5de" stroke-width="3" /><line x1="533" y1="92" x2="533" y2="306" stroke="#d0202a" stroke-width="6" /><rect x="748" y="78" width="49" height="49" rx="0" fill="#6ab0e6" stroke="#5aa5de" stroke-width="3" /><path d="M748 127H843V173H748ZM797 127V173" fill="none" stroke="#666" stroke-width="6" /><path d="M788 185V305M788 210H845M788 250H845M788 290H845" fill="none" stroke="#8a8a8a" stroke-width="6" /><rect x="862" y="140" width="128" height="180" rx="0" fill="#fff" stroke="#666" stroke-width="6" /><rect x="862" y="140" width="128" height="28" rx="0" fill="#666" stroke="none" stroke-width="0" /><rect x="872" y="150" width="13" height="6" rx="0" fill="#fff" stroke="none" stroke-width="0" /><path d="M862 197H990M862 228H990M862 258H990M862 290H990M903 168V320" fill="none" stroke="#999" stroke-width="5" /><rect x="862" y="140" width="128" height="180" rx="0" fill="none" stroke="#666" stroke-width="6" /><line x1="1067" y1="75" x2="1067" y2="462" stroke="#c8c8c8" stroke-width="4" /><polygon points="1183,125 1235,78 1395,78 1345,125" fill="#f0f0f0" stroke="#999" stroke-width="3" /><polygon points="1345,125 1395,78 1395,240 1345,290" fill="#b8b8b8" stroke="#999" stroke-width="3" /><rect x="1183" y="125" width="162" height="165" rx="0" fill="#dcdcdc" stroke="#999" stroke-width="3" /><line x1="1317" y1="253" x2="1433" y2="253" stroke="#f2f2f2" stroke-width="22" /><line x1="1317" y1="297" x2="1433" y2="297" stroke="#f2f2f2" stroke-width="22" /><rect x="1385" y="270" width="26" height="54" rx="0" fill="#f2f2f2" stroke="none" stroke-width="0" /><line x1="1322" y1="253" x2="1428" y2="253" stroke="#666" stroke-width="12" /><line x1="1322" y1="297" x2="1428" y2="297" stroke="#666" stroke-width="12" /><rect x="1342" y="231" width="18" height="44" rx="0" fill="#1a8ae0" stroke="#f2f2f2" stroke-width="4" /><rect x="1390" y="275" width="16" height="44" rx="0" fill="#666" stroke="none" stroke-width="0" /><rect x="1517" y="80" width="223" height="216" rx="0" fill="#f2f2f2" stroke="#666" stroke-width="6" /><rect x="1517" y="80" width="223" height="45" rx="0" fill="#666" stroke="none" stroke-width="0" /><rect x="1530" y="93" width="28" height="12" rx="0" fill="#fff" stroke="none" stroke-width="0" /><path d="M1540 150H1718V265H1540ZM1540 190H1718M1540 228H1718M1580 150V265M1620 150V265" fill="none" stroke="#666" stroke-width="6" /><line x1="1645" y1="253" x2="1761" y2="253" stroke="#f2f2f2" stroke-width="22" /><line x1="1645" y1="297" x2="1761" y2="297" stroke="#f2f2f2" stroke-width="22" /><rect x="1713" y="270" width="26" height="54" rx="0" fill="#f2f2f2" stroke="none" stroke-width="0" /><line x1="1650" y1="253" x2="1756" y2="253" stroke="#666" stroke-width="12" /><line x1="1650" y1="297" x2="1756" y2="297" stroke="#666" stroke-width="12" /><rect x="1670" y="231" width="18" height="44" rx="0" fill="#1a8ae0" stroke="#f2f2f2" stroke-width="4" /><rect x="1718" y="275" width="16" height="44" rx="0" fill="#666" stroke="none" stroke-width="0" /><line x1="1857" y1="75" x2="1857" y2="462" stroke="#c8c8c8" stroke-width="4" /><polygon points="562,400 605,400 583.5,430" fill="#333" stroke="none" stroke-width="0" /><polygon points="1677,400 1720,400 1698.5,430" fill="#333" stroke="none" stroke-width="0" /></g><g transform="translate(2000,230) scale(0.294118)"><polygon points="207,130 265,72 320,72 262,130" fill="#f0f0f0" stroke="#666" stroke-width="5" stroke-linejoin="round"/><rect x="207" y="130" width="55" height="145" rx="0" fill="#dcdcdc" stroke="#666" stroke-width="5" /><polygon points="268,130 325,72 325,218 268,275" fill="#5cc87f" stroke="#46b06a" stroke-width="3" /><polygon points="348,128 407,70 407,215 348,275" fill="#e89a62" stroke="#d8854a" stroke-width="3" /><line x1="653" y1="65" x2="653" y2="410" stroke="#c8c8c8" stroke-width="3.5" /><path d="M832 122V186M1017 122V186M842 153H1008" fill="none" stroke="#666" stroke-width="5" /><polygon points="838,153 866,139 866,167" fill="#666" stroke="none" stroke-width="0" /><polygon points="1012,153 984,139 984,167" fill="#666" stroke="none" stroke-width="0" /><rect x="830" y="188" width="190" height="42" rx="0" fill="#f7a400" stroke="#d89000" stroke-width="3" /><path d="M850 190V205M872 190V212M894 190V205M916 190V212M938 190V205M960 190V212M982 190V205M1004 190V212" fill="none" stroke="#555" stroke-width="4" /><line x1="1190" y1="65" x2="1190" y2="410" stroke="#c8c8c8" stroke-width="3.5" /><rect x="1320" y="125" width="90" height="157" rx="8" fill="#8ccdfa" stroke="#4a95cf" stroke-width="3" /><path d="M1320 145L1410 151M1320 161L1410 167M1320 177L1410 183M1320 193L1410 199M1320 209L1410 215M1320 225L1410 231M1320 241L1410 247M1320 257L1410 263M1320 273L1410 279" fill="none" stroke="#4a95cf" stroke-width="5" /><path d="M1285 85Q1285 78 1295 78H1437Q1447 78 1447 85V125H1285Z" fill="#6ab0e6" stroke="#4a95cf" stroke-width="3" /><rect x="1330" y="80" width="80" height="44" rx="0" fill="#8ccdfa" stroke="none" stroke-width="0" /><polygon points="1424.5,190 1457.5,190 1457.5,221.5 1489,221.5 1489,254.5 1457.5,254.5 1457.5,286 1424.5,286 1424.5,254.5 1393,254.5 1393,221.5 1424.5,221.5" fill="#22a84a" stroke="#1d8f3e" stroke-width="3" /><rect x="1572" y="75" width="195" height="195" rx="0" fill="#8ccdfa" stroke="#4a95cf" stroke-width="4" /><path d="M1572 270V200Q1615 140 1655 180Q1690 228 1720 202Q1745 185 1767 225V270Z" fill="#4a95cf" stroke="none" stroke-width="0" /><circle cx="1713" cy="127" r="22" fill="#fffbd0" stroke="none" stroke-width="0" /><line x1="1850" y1="65" x2="1850" y2="410" stroke="#c8c8c8" stroke-width="3.5" /><rect x="1975" y="45" width="265" height="263" rx="6" fill="#0696d7" stroke="none" stroke-width="0" /><rect x="2002" y="70" width="186" height="143" rx="0" fill="none" stroke="#7fe07f" stroke-width="5" stroke-dasharray="24 12"/><polygon points="2140,163 2140,268 2163,248 2182,288 2203,278 2184,240 2216,238" fill="#fff" stroke="#0696d7" stroke-width="3" /><polygon points="520,355 555,355 537.5,381" fill="#333" stroke="none" stroke-width="0" /><polygon points="1068,355 1107,355 1087.5,381" fill="#333" stroke="none" stroke-width="0" /><polygon points="1627,355 1665,355 1646,381" fill="#333" stroke="none" stroke-width="0" /><polygon points="2232,355 2270,355 2251,381" fill="#333" stroke="none" stroke-width="0" /></g><polygon points="175.9,273.9 188.2,273.9 182.05,281.8" fill="#3c3c3c" stroke="none" stroke-width="0" /></svg><svg style="position:absolute;left:0.00px;top:289.00px;" width="2916.00" height="1501.00" viewBox="0 365 2916 1501"><rect x="0" y="365" width="2916" height="1501" fill="#fff"/><path d="M-50.0 796.5L1531.8 400.8M-50.0 807.0L1547.0 404.6M-50.0 817.7L1562.3 408.5M-50.0 828.5L1577.7 412.3M-50.0 850.7L1608.8 420.1M-50.0 862.1L1624.6 424.1M-50.0 873.6L1640.5 428.0M-50.0 885.3L1656.5 432.0M-50.0 909.3L1688.8 440.1M-50.0 921.6L1705.2 444.2M-50.0 934.0L1721.7 448.4M-50.0 946.7L1738.3 452.5M-50.0 972.7L1772.0 460.9M-50.0 986.0L1789.0 465.2M-50.0 999.5L1806.1 469.5M-50.0 1013.3L1823.4 473.8M-50.0 1041.5L1858.4 482.6M-50.0 1056.0L1876.0 487.0M-50.0 1070.7L1893.9 491.5M-50.0 1085.7L1911.9 496.0M-50.0 1116.5L1948.2 505.1M-50.0 1132.3L1966.7 509.7M-50.0 1148.4L1985.2 514.3M-50.0 1164.8L2003.9 519.0M-50.0 1198.5L2041.8 528.5M-50.0 1215.8L2061.0 533.3M-50.0 1233.5L2080.4 538.1M-50.0 1251.5L2099.9 543.0M-50.0 1288.5L2139.4 552.9M-50.0 1307.6L2159.4 557.9M-50.0 1327.1L2179.6 563.0M-50.0 1346.9L2199.9 568.1M-50.0 1387.9L2241.1 578.4M-50.0 1409.0L2262.0 583.6M-50.0 1430.6L2283.1 588.9M-50.0 1452.6L2304.3 594.2M-50.0 1498.1L2347.3 605.0M-50.0 1521.6L2369.1 610.4M-50.0 1545.7L2391.1 615.9M-50.0 1570.2L2413.3 621.5M-50.0 1621.1L2458.3 632.7M-50.0 1647.4L2481.1 638.4M-50.0 1674.3L2504.1 644.2M-50.0 1701.9L2527.3 650.0M-50.0 1759.1L2574.4 661.8M-50.0 1788.7L2598.3 667.8M-50.0 1819.1L2622.4 673.8M-50.0 1850.3L2646.7 679.9M-16.2 1900.0L2696.0 692.2M58.0 1900.0L2721.0 698.5M132.2 1900.0L2746.2 704.8M206.4 1900.0L2771.7 711.2M354.8 1900.0L2823.4 724.1M429.0 1900.0L2849.6 730.7M503.2 1900.0L2876.1 737.3M577.5 1900.0L2902.8 744.0M725.9 1900.0L2957.1 757.6M800.1 1900.0L2970.0 772.1M874.3 1900.0L2970.0 793.8M948.6 1900.0L2970.0 816.3M1097.0 1900.0L2970.0 863.3M1171.3 1900.0L2970.0 888.0M1245.5 1900.0L2970.0 913.6M1319.7 1900.0L2970.0 940.0M1468.2 1900.0L2970.0 995.6M1542.5 1900.0L2970.0 1024.8M1616.8 1900.0L2970.0 1055.2M1691.0 1900.0L2970.0 1086.7M1839.5 1900.0L2970.0 1153.4M1913.8 1900.0L2970.0 1188.7M1988.1 1900.0L2970.0 1225.4M2062.4 1900.0L2970.0 1263.6M2210.9 1900.0L2970.0 1345.0M2285.2 1900.0L2970.0 1388.3M2359.5 1900.0L2970.0 1433.6M2433.8 1900.0L2970.0 1481.0M2582.4 1900.0L2970.0 1582.6M2656.7 1900.0L2970.0 1637.1M2731.0 1900.0L2970.0 1694.4M2805.3 1900.0L2970.0 1754.7M2953.9 1900.0L2970.0 1885.0M-50.0 1833.5L18.6 1900.0M-50.0 1703.4L164.0 1900.0M-50.0 1643.4L236.7 1900.0M-50.0 1586.3L309.4 1900.0M-50.0 1532.1L382.1 1900.0M-50.0 1431.2L527.5 1900.0M-50.0 1384.2L600.2 1900.0M-50.0 1339.3L672.9 1900.0M-50.0 1296.4L745.6 1900.0M-50.0 1215.9L891.1 1900.0M-50.0 1178.1L963.8 1900.0M-50.0 1141.8L1036.5 1900.0M-50.0 1107.0L1109.3 1900.0M-50.0 1041.2L1254.7 1900.0M-50.0 1010.2L1327.5 1900.0M-50.0 980.3L1400.2 1900.0M-50.0 951.4L1473.0 1900.0M-50.0 896.7L1618.5 1900.0M-50.0 870.7L1691.2 1900.0M-50.0 845.7L1764.0 1900.0M-50.0 821.4L1836.7 1900.0M-23.5 789.8L1982.3 1900.0M4.5 782.8L2055.0 1900.0M32.2 775.9L2127.8 1900.0M59.7 769.0L2200.6 1900.0M113.8 755.5L2346.2 1900.0M140.5 748.8L2418.9 1900.0M166.9 742.2L2491.7 1900.0M193.0 735.7L2564.5 1900.0M244.6 722.8L2710.1 1900.0M270.1 716.4L2782.9 1900.0M295.3 710.1L2855.7 1900.0M320.2 703.9L2928.5 1900.0M369.5 691.5L2970.0 1853.5M393.7 685.5L2970.0 1821.9M417.8 679.5L2970.0 1791.2M441.6 673.5L2970.0 1761.2M488.7 661.7L2970.0 1703.4M511.9 655.9L2970.0 1675.6M534.9 650.2L2970.0 1648.4M557.7 644.5L2970.0 1621.8M602.7 633.2L2970.0 1570.4M624.9 627.7L2970.0 1545.6M646.9 622.2L2970.0 1521.4M668.7 616.7L2970.0 1497.7M711.8 605.9L2970.0 1451.8M733.0 600.6L2970.0 1429.6M754.1 595.3L2970.0 1407.8M775.0 590.1L2970.0 1386.5M816.3 579.8L2970.0 1345.2M836.6 574.7L2970.0 1325.2M856.9 569.6L2970.0 1305.6M876.9 564.6L2970.0 1286.4M916.5 554.7L2970.0 1249.0M936.0 549.8L2970.0 1230.9M955.4 545.0L2970.0 1213.1M974.6 540.2L2970.0 1195.7M1012.6 530.7L2970.0 1161.7M1031.4 526.0L2970.0 1145.2M1050.0 521.3L2970.0 1129.0M1068.5 516.7L2970.0 1113.1M1105.0 507.6L2970.0 1082.2M1123.0 503.1L2970.0 1067.1M1140.9 498.6L2970.0 1052.3M1158.6 494.2L2970.0 1037.7M1193.7 485.4L2970.0 1009.4M1211.1 481.0L2970.0 995.5M1228.3 476.7L2970.0 981.9M1245.4 472.5L2970.0 968.6M1279.1 464.0L2970.0 942.5M1295.8 459.8L2970.0 929.8M1312.4 455.7L2970.0 917.2M1328.8 451.6L2970.0 904.9M1361.3 443.5L2970.0 880.8M1377.4 439.4L2970.0 869.1M1393.3 435.4L2970.0 857.5M1409.2 431.5L2970.0 846.1M1440.5 423.7L2970.0 823.8M1456.0 419.8L2970.0 812.9M1471.4 415.9L2970.0 802.2M1486.6 412.1L2970.0 791.6M1516.8 404.6L2970.0 770.9M1531.8 400.8L2970.0 760.8" fill="none" stroke="#eeeeee" stroke-width="1" /><path d="M-50.0 839.6L1593.2 416.2M-50.0 897.2L1672.6 436.1M-50.0 959.6L1755.1 456.7M-50.0 1027.3L1840.8 478.2M-50.0 1100.9L1930.0 500.5M-50.0 1181.4L2022.8 523.7M-50.0 1269.8L2119.6 547.9M-50.0 1367.2L2220.4 573.2M-50.0 1475.1L2325.7 599.5M-50.0 1595.4L2435.7 627.1M-50.0 1882.3L2671.2 686.0M280.6 1900.0L2797.4 717.6M651.7 1900.0L2929.8 750.8M1022.8 1900.0L2970.0 839.4M1394.0 1900.0L2970.0 967.3M1765.3 1900.0L2970.0 1119.4M2136.6 1900.0L2970.0 1303.4M2508.1 1900.0L2970.0 1530.6M2879.6 1900.0L2970.0 1818.1M-50.0 1766.7L91.3 1900.0M-50.0 1480.5L454.8 1900.0M-50.0 1255.3L818.4 1900.0M-50.0 1073.5L1182.0 1900.0M-50.0 923.6L1545.7 1900.0M-50.0 797.9L1909.5 1900.0M219.0 729.2L2637.3 1900.0M345.0 697.7L2970.0 1885.8M465.3 667.6L2970.0 1732.0M580.3 638.8L2970.0 1595.8M690.3 611.3L2970.0 1474.5M795.7 584.9L2970.0 1365.6M896.8 559.7L2970.0 1267.5M993.7 535.4L2970.0 1178.5M1086.8 512.1L2970.0 1097.5M1176.3 489.7L2970.0 1023.4M1262.3 468.2L2970.0 955.4M1345.1 447.5L2970.0 892.8M1424.9 427.6L2970.0 834.9M1501.8 408.3L2970.0 781.2" fill="none" stroke="#cbcbcb" stroke-width="1" /><path d="M-50.0 796.5L1531.8 400.8M1531.8 400.8L2970.0 760.8" fill="none" stroke="#8e8e8e" stroke-width="1.25" /><path d="M86.9 762.2L2273.4 1900.0" fill="none" stroke="#f79c9c" stroke-width="1.2" /><path d="M-50.0 1730.1L2550.8 655.9" fill="none" stroke="#96ef96" stroke-width="1.2" /><defs><linearGradient id="gt" gradientUnits="userSpaceOnUse" x1="1063" y1="1270" x2="1986" y2="944"><stop offset="0" stop-color="#a59e8f"/><stop offset="0.5" stop-color="#b1ab9e"/><stop offset="1" stop-color="#c2c1b5"/></linearGradient><linearGradient id="gs" gradientUnits="userSpaceOnUse" x1="1159" y1="1320" x2="1986" y2="963"><stop offset="0" stop-color="#85827a"/><stop offset="1" stop-color="#96938b"/></linearGradient><filter id="bl"><feGaussianBlur stdDeviation="1.5"/></filter></defs><ellipse cx="1055.8" cy="1271.2" rx="11.4" ry="7.7" fill="none" stroke="#a4a4a4" stroke-width="4.2" filter="url(#bl)"/><path d="M1159.1 1298.0 L1307.5 1234.5 L1314.3 1231.5 L1321.1 1228.4 L1327.6 1225.3 L1334.0 1222.1 L1340.2 1218.9 L1346.3 1215.6 L1352.2 1212.2 L1357.9 1208.8 L1363.5 1205.3 L1363.8 1205.1 L1369.0 1201.9 L1374.5 1198.4 L1380.2 1195.1 L1385.8 1191.8 L1391.6 1188.5 L1397.4 1185.3 L1403.3 1182.1 L1409.3 1179.0 L1415.3 1176.0 L1421.4 1172.9 L1427.6 1170.0 L1433.8 1167.1 L1440.1 1164.2 L1446.5 1161.4 L1452.9 1158.6 L1738.4 1037.4 L1743.9 1035.1 L1749.5 1032.8 L1755.2 1030.6 L1761.0 1028.4 L1766.8 1026.2 L1772.7 1024.1 L1778.7 1022.0 L1784.8 1020.0 L1790.9 1018.0 L1797.1 1016.0 L1803.4 1014.1 L1809.7 1012.2 L1816.2 1010.3 L1822.7 1008.5 L1827.1 1007.3 L1829.2 1006.7 L1835.7 1004.9 L1842.0 1003.0 L1848.1 1001.1 L1854.1 999.2 L1860.0 997.2 L1865.7 995.1 L1871.2 993.1 L1876.6 990.9 L1881.8 988.7 L1986.3 944.0 L1985.6 962.7 L1881.2 1007.9 L1876.0 1010.1 L1870.6 1012.3 L1865.1 1014.4 L1859.4 1016.5 L1853.6 1018.5 L1847.6 1020.5 L1841.5 1022.4 L1835.2 1024.3 L1828.7 1026.1 L1826.5 1026.7 L1822.1 1027.9 L1815.6 1029.7 L1809.2 1031.6 L1802.9 1033.5 L1796.6 1035.5 L1790.4 1037.4 L1784.3 1039.5 L1778.2 1041.5 L1772.3 1043.6 L1766.4 1045.8 L1760.5 1048.0 L1754.8 1050.2 L1749.1 1052.4 L1743.5 1054.7 L1737.9 1057.1 L1452.9 1179.6 L1446.4 1182.4 L1440.1 1185.2 L1433.8 1188.1 L1427.6 1191.1 L1421.4 1194.0 L1415.3 1197.1 L1409.3 1200.2 L1403.4 1203.3 L1397.5 1206.5 L1391.6 1209.8 L1385.9 1213.1 L1380.2 1216.4 L1374.6 1219.8 L1369.0 1223.3 L1363.9 1226.6 L1363.5 1226.8 L1358.0 1230.3 L1352.3 1233.7 L1346.4 1237.1 L1340.3 1240.4 L1334.1 1243.7 L1327.8 1246.9 L1321.2 1250.1 L1314.5 1253.2 L1307.6 1256.2 L1159.5 1320.4Z" fill="url(#gs)" stroke="#1a1a1a" stroke-width="1.25" stroke-linejoin="round"/><path d="M1062.7 1248.4 L1159.1 1298.0 L1159.5 1320.4 L1063.3 1270.3Z" fill="#b3b4ab" stroke="#1a1a1a" stroke-width="1.25" stroke-linejoin="round"/><path d="M1159.1 1298.0 L1307.5 1234.5 L1314.3 1231.5 L1321.1 1228.4 L1327.6 1225.3 L1334.0 1222.1 L1340.2 1218.9 L1346.3 1215.6 L1352.2 1212.2 L1357.9 1208.8 L1363.5 1205.3 L1363.8 1205.1 L1369.0 1201.9 L1374.5 1198.4 L1380.2 1195.1 L1385.8 1191.8 L1391.6 1188.5 L1397.4 1185.3 L1403.3 1182.1 L1409.3 1179.0 L1415.3 1176.0 L1421.4 1172.9 L1427.6 1170.0 L1433.8 1167.1 L1440.1 1164.2 L1446.5 1161.4 L1452.9 1158.6 L1738.4 1037.4 L1743.9 1035.1 L1749.5 1032.8 L1755.2 1030.6 L1761.0 1028.4 L1766.8 1026.2 L1772.7 1024.1 L1778.7 1022.0 L1784.8 1020.0 L1790.9 1018.0 L1797.1 1016.0 L1803.4 1014.1 L1809.7 1012.2 L1816.2 1010.3 L1822.7 1008.5 L1827.1 1007.3 L1829.2 1006.7 L1835.7 1004.9 L1842.0 1003.0 L1848.1 1001.1 L1854.1 999.2 L1860.0 997.2 L1865.7 995.1 L1871.2 993.1 L1876.6 990.9 L1881.8 988.7 L1986.3 944.0 L1889.7 910.8 L1784.9 953.6 L1779.8 955.8 L1774.8 957.9 L1769.9 960.2 L1765.1 962.5 L1760.5 964.9 L1756.0 967.3 L1751.6 969.7 L1747.4 972.3 L1743.2 974.8 L1741.9 975.7 L1739.1 977.5 L1735.0 980.1 L1730.7 982.7 L1726.4 985.2 L1721.9 987.8 L1717.3 990.3 L1712.7 992.8 L1707.9 995.2 L1703.1 997.7 L1698.1 1000.1 L1693.0 1002.5 L1687.9 1004.8 L1682.6 1007.1 L1677.3 1009.5 L1671.8 1011.7 L1386.3 1129.1 L1379.8 1131.8 L1373.2 1134.4 L1366.5 1137.0 L1359.6 1139.5 L1352.7 1142.1 L1345.7 1144.5 L1338.6 1147.0 L1331.3 1149.4 L1324.0 1151.8 L1316.5 1154.2 L1309.0 1156.5 L1301.3 1158.8 L1293.6 1161.1 L1285.7 1163.3 L1278.2 1165.4 L1277.7 1165.5 L1269.8 1167.8 L1262.0 1170.0 L1254.3 1172.4 L1246.7 1174.9 L1239.2 1177.4 L1231.9 1179.9 L1224.6 1182.6 L1217.5 1185.3 L1210.5 1188.1 L1062.7 1248.4Z" fill="url(#gt)" stroke="#1a1a1a" stroke-width="1.25" stroke-linejoin="round"/><path d="M1307.5 1234.5L1307.6 1256.2M1363.8 1205.1L1363.9 1226.6M1452.9 1158.6L1452.9 1179.6M1738.4 1037.4L1737.9 1057.1M1827.1 1007.3L1826.5 1026.7M1881.8 988.7L1881.2 1007.9" fill="none" stroke="#1a1a1a" stroke-width="1.25" /><line x1="1063.3" y1="1270.3" x2="1159.5" y2="1320.4" stroke="#a83030" stroke-width="1.3"/><defs><filter id="vb" x="-60%" y="-150%" width="220%" height="400%"><feGaussianBlur stdDeviation="14"/></filter><linearGradient id="vf" x1="0" y1="0" x2="0" y2="1"><stop offset="0" stop-color="#ececec"/><stop offset="1" stop-color="#dcdcdc"/></linearGradient><linearGradient id="vr" x1="0" y1="0" x2="0" y2="1"><stop offset="0" stop-color="#efefef"/><stop offset="1" stop-color="#e2e2e2"/></linearGradient></defs><ellipse cx="2790" cy="556" rx="72" ry="26" fill="#9a9a9a" opacity=".55" filter="url(#vb)"/><polygon points="2720.6,449.7 2788.9,429.2 2857.8,449.7 2787.5,475.9" fill="#f0f0f0" stroke="#b8b8b8" stroke-width="1" stroke-linejoin="round"/><polygon points="2720.6,449.7 2787.5,475.9 2787.5,570 2724,534.2" fill="url(#vf)" stroke="#b8b8b8" stroke-width="1" stroke-linejoin="round"/><polygon points="2787.5,475.9 2857.8,449.7 2853,530.8 2787.5,570" fill="url(#vr)" stroke="#b8b8b8" stroke-width="1" stroke-linejoin="round"/><polygon points="2773.5,470.4 2787.5,465.5 2801.5,470.6 2801.5,486 2787.5,493.5 2773.5,487" fill="#e3e5ea" stroke="none" stroke-width="0" /><line x1="2787.5" y1="476" x2="2787.5" y2="570" stroke="#b0b0b0" stroke-width="1" stroke-dasharray="9 3"/><line x1="2716.9" y1="434" x2="2724" y2="534.5" stroke="#6464f0" stroke-width="2.2" /><line x1="2724" y1="535" x2="2799.5" y2="580.6" stroke="#f08a8a" stroke-width="2.2" /><text transform="matrix(0.93 0.37 0.03 1 2754.5 519.5)" font-family="Liberation Sans, sans-serif" font-size="29" font-weight="700" fill="#9a9ea8" text-anchor="middle" textLength="48" lengthAdjust="spacingAndGlyphs">FRONT</text><text transform="matrix(0.93 -0.35 -0.03 1 2823 518.5)" font-family="Liberation Sans, sans-serif" font-size="29" font-weight="700" fill="#9a9ea8" text-anchor="middle" textLength="46" lengthAdjust="spacingAndGlyphs">RIGHT</text><text transform="matrix(0.93 0.30 -0.75 0.28 2785.5 452)" font-family="Liberation Sans, sans-serif" font-size="20" font-weight="700" fill="#a8abb2" text-anchor="middle" textLength="37" lengthAdjust="spacingAndGlyphs">TOP</text><text transform="matrix(1 0 0 1 2715 429.4)" font-family="Liberation Sans, sans-serif" font-size="30" font-weight="700" fill="#7474fb" text-anchor="middle" textLength="14.5" lengthAdjust="spacingAndGlyphs">Z</text><text transform="matrix(1 0 0 1 2810.7 598.8)" font-family="Liberation Sans, sans-serif" font-size="31" font-weight="700" fill="#ff8484" text-anchor="middle" textLength="14" lengthAdjust="spacingAndGlyphs">X</text></svg><div class="" style="position:absolute;left:8.00px;top:298.40px;width:598.70px;height:48.10px;box-sizing:border-box;background:#f2f2f2;border:1.500px solid #c9c9c9;box-shadow:1.500px 1.500px 0 #cfcfcf"></div><span class="t " style="left:59.70px;top:311.00px;font-size:22.80px;color:#555;font-weight:400;transform:scaleX(0.8310);">BROWSER</span><svg style="position:absolute;left:565.00px;top:312.45px;" width="20.00" height="20.00" viewBox="0 0 20 20"><circle cx="10" cy="10" r="9.5" fill="#333" stroke="none" stroke-width="0" /><rect x="5" y="8.8" width="10" height="2.4" rx="0" fill="#fff" stroke="none" stroke-width="0" /></svg><svg style="position:absolute;left:17.00px;top:316.00px;" width="24.00" height="16.00" viewBox="0 0 24 16"><polygon points="0.6,8 9,2.5 9,13.5" fill="#333" stroke="none" stroke-width="0" /><polygon points="10,8 18.4,2.5 18.4,13.5" fill="#333" stroke="none" stroke-width="0" /><rect x="18.4" y="2.5" width="3" height="11" rx="0" fill="#333" stroke="none" stroke-width="0" /><rect x="9" y="6.6" width="3" height="2.8" rx="0" fill="#333" stroke="none" stroke-width="0" /></svg><div class="" style="position:absolute;left:79.80px;top:358.00px;width:448.00px;height:40.00px;background:#f1f1f1"></div><svg style="position:absolute;left:44.70px;top:370.50px;" width="15.00" height="15.00" viewBox="0 0 15 15"><polygon points="14,0.5 14,14 0.5,14" fill="#222" stroke="#222" stroke-width="1" /></svg><svg style="position:absolute;left:86.00px;top:367.50px;" width="32.00" height="22.00" viewBox="0 -1 32 22"><path d="M0 10Q16 -8 32 10Q16 28 0 10Z" fill="#979797" stroke="none" stroke-width="0" /><circle cx="16" cy="10" r="6.6" fill="#f1f1f1" stroke="none" stroke-width="0" /><circle cx="16" cy="10" r="3.6" fill="#979797" stroke="none" stroke-width="0" /></svg><div class="" style="position:absolute;left:130.00px;top:362.00px;width:348.00px;height:32.00px;background:#9a9a9a"></div><svg style="position:absolute;left:139.00px;top:364.50px;" width="26.00" height="25.00" viewBox="0 0 26 25"><path d="M1 7L6 1H25V19L20 24H1Z" fill="#e4e6ec" stroke="#6a6a6a" stroke-width="1.4" stroke-linejoin="round"/><path d="M1 7H20V24M20 7L25 1" fill="none" stroke="#6a6a6a" stroke-width="1.2" /><path d="M20 7L25 1V19L20 24Z" fill="#c2c5cc" stroke="none" stroke-width="0" /></svg><span class="t " style="left:195.70px;top:368.00px;font-size:22.50px;color:#fff;font-weight:700;transform:scaleX(1.0359);">Standardized_Dogbone</span><svg style="position:absolute;left:486.50px;top:363.50px;" width="27.00" height="27.00" viewBox="0 0 27 27"><defs><radialGradient id="rg" cx=".4" cy=".35" r=".7"><stop offset="0" stop-color="#fff"/><stop offset="1" stop-color="#c9ccd6"/></radialGradient></defs><circle cx="13.5" cy="13.5" r="12.5" fill="url(#rg)" stroke="#555" stroke-width="1.6" /><circle cx="13.5" cy="13.5" r="4.6" fill="#333" stroke="none" stroke-width="0" /></svg><div class="" style="position:absolute;left:116.00px;top:406.00px;width:291.80px;height:40.00px;background:#f1f1f1"></div><svg style="position:absolute;left:81.00px;top:417.00px;" width="14.00" height="19.00" viewBox="0 0 14 19"><polygon points="1.2,1.5 12.5,9.5 1.2,17.5" fill="#fff" stroke="#222" stroke-width="1.6" stroke-linejoin="round"/></svg><svg style="position:absolute;left:122.00px;top:411.00px;" width="30.00" height="30.00" viewBox="0 0 30 30"><path d="M25.51 11.75L29.70 12.02L29.70 17.98L25.51 18.25L24.73 20.13L27.50 23.29L23.29 27.50L20.13 24.73L18.25 25.51L17.98 29.70L12.02 29.70L11.75 25.51L9.87 24.73L6.71 27.50L2.50 23.29L5.27 20.13L4.49 18.25L0.30 17.98L0.30 12.02L4.49 11.75L5.27 9.87L2.50 6.71L6.71 2.50L9.87 5.27L11.75 4.49L12.02 0.30L17.98 0.30L18.25 4.49L20.13 5.27L23.29 2.50L27.50 6.71L24.73 9.87Z" fill="#7b7b7b" stroke="none" stroke-width="0" /><circle cx="15" cy="15" r="6.2" fill="#f1f1f1" stroke="none" stroke-width="0" /></svg><span class="t " style="left:182.70px;top:416.00px;font-size:21.50px;color:#333;font-weight:400;transform:scaleX(1.0982);">Document Settings</span><div class="" style="position:absolute;left:116.00px;top:454.00px;width:228.00px;height:40.00px;background:#f1f1f1"></div><svg style="position:absolute;left:81.00px;top:465.00px;" width="14.00" height="19.00" viewBox="0 0 14 19"><polygon points="1.2,1.5 12.5,9.5 1.2,17.5" fill="#fff" stroke="#222" stroke-width="1.6" stroke-linejoin="round"/></svg><svg style="position:absolute;left:122.00px;top:461.00px;" width="32.00" height="26.00" viewBox="0 0 32 26"><path d="M0 2Q0 0 2 0H11.500L14 3H0Z" fill="#989898" stroke="none" stroke-width="0" /><path d="M0 4.800H30Q32 4.800 32 6.800V24Q32 26 30 26H2Q0 26 0 24Z" fill="#989898" stroke="none" stroke-width="0" /><path d="M0 3.800H14.500" fill="none" stroke="#c4c4c4" stroke-width="1" /></svg><span class="t " style="left:182.70px;top:464.00px;font-size:21.50px;color:#333;font-weight:400;transform:scaleX(1.0624);">Named Views</span><div class="" style="position:absolute;left:116.00px;top:502.00px;width:206.00px;height:40.00px;background:#f1f1f1"></div><svg style="position:absolute;left:81.00px;top:513.00px;" width="14.00" height="19.00" viewBox="0 0 14 19"><polygon points="1.2,1.5 12.5,9.5 1.2,17.5" fill="#fff" stroke="#222" stroke-width="1.6" stroke-linejoin="round"/></svg><svg style="position:absolute;left:122.00px;top:511.50px;" width="32.00" height="22.00" viewBox="0 -1 32 22"><path d="M1 10Q16 -6 31 10Q16 26 1 10Z" fill="none" stroke="#979797" stroke-width="2.2" /><circle cx="16" cy="10" r="5" fill="none" stroke="#979797" stroke-width="2.2" /><path d="M6 -1L26 21" fill="none" stroke="#f1f1f1" stroke-width="6" /><path d="M6 -1L26 21" fill="none" stroke="#979797" stroke-width="2.2" /></svg><svg style="position:absolute;left:171.80px;top:509.00px;" width="32.00" height="26.00" viewBox="0 0 32 26"><path d="M0 2Q0 0 2 0H11.500L14 3H0Z" fill="#989898" stroke="none" stroke-width="0" /><path d="M0 4.800H30Q32 4.800 32 6.800V24Q32 26 30 26H2Q0 26 0 24Z" fill="#989898" stroke="none" stroke-width="0" /><path d="M0 3.800H14.500" fill="none" stroke="#c4c4c4" stroke-width="1" /></svg><span class="t " style="left:232.50px;top:512.00px;font-size:21.50px;color:#333;font-weight:400;transform:scaleX(1.1244);">Origin</span><div class="" style="position:absolute;left:116.00px;top:550.00px;width:206.00px;height:40.00px;background:#f1f1f1"></div><svg style="position:absolute;left:81.00px;top:561.00px;" width="14.00" height="19.00" viewBox="0 0 14 19"><polygon points="1.2,1.5 12.5,9.5 1.2,17.5" fill="#fff" stroke="#222" stroke-width="1.6" stroke-linejoin="round"/></svg><svg style="position:absolute;left:122.00px;top:559.50px;" width="32.00" height="22.00" viewBox="0 -1 32 22"><path d="M0 10Q16 -8 32 10Q16 28 0 10Z" fill="#979797" stroke="none" stroke-width="0" /><circle cx="16" cy="10" r="6.6" fill="#f1f1f1" stroke="none" stroke-width="0" /><circle cx="16" cy="10" r="3.6" fill="#979797" stroke="none" stroke-width="0" /></svg><svg style="position:absolute;left:171.80px;top:557.00px;" width="32.00" height="26.00" viewBox="0 0 32 26"><path d="M0 2Q0 0 2 0H11.500L14 3H0Z" fill="#989898" stroke="none" stroke-width="0" /><path d="M0 4.800H30Q32 4.800 32 6.800V24Q32 26 30 26H2Q0 26 0 24Z" fill="#989898" stroke="none" stroke-width="0" /><path d="M0 3.800H14.500" fill="none" stroke="#c4c4c4" stroke-width="1" /></svg><span class="t " style="left:232.50px;top:560.00px;font-size:21.50px;color:#333;font-weight:400;transform:scaleX(1.0297);">Bodies</span><div class="" style="position:absolute;left:116.00px;top:598.00px;width:229.80px;height:40.00px;background:#f1f1f1"></div><svg style="position:absolute;left:80.50px;top:610.50px;" width="15.00" height="15.00" viewBox="0 0 15 15"><polygon points="14,0.5 14,14 0.5,14" fill="#222" stroke="#222" stroke-width="1" /></svg><svg style="position:absolute;left:122.00px;top:607.50px;" width="32.00" height="22.00" viewBox="0 -1 32 22"><path d="M0 10Q16 -8 32 10Q16 28 0 10Z" fill="#979797" stroke="none" stroke-width="0" /><circle cx="16" cy="10" r="6.6" fill="#f1f1f1" stroke="none" stroke-width="0" /><circle cx="16" cy="10" r="3.6" fill="#979797" stroke="none" stroke-width="0" /></svg><svg style="position:absolute;left:171.80px;top:605.00px;" width="32.00" height="26.00" viewBox="0 0 32 26"><path d="M0 2Q0 0 2 0H11.500L14 3H0Z" fill="#989898" stroke="none" stroke-width="0" /><path d="M0 4.800H30Q32 4.800 32 6.800V24Q32 26 30 26H2Q0 26 0 24Z" fill="#989898" stroke="none" stroke-width="0" /><path d="M0 3.800H14.500" fill="none" stroke="#c4c4c4" stroke-width="1" /></svg><span class="t " style="left:232.50px;top:608.00px;font-size:21.50px;color:#333;font-weight:400;transform:scaleX(1.0325);">Sketches</span><div class="" style="position:absolute;left:152.00px;top:646.00px;width:221.60px;height:40.00px;background:#f1f1f1"></div><svg style="position:absolute;left:158.40px;top:655.50px;" width="32.00" height="22.00" viewBox="0 -1 32 22"><path d="M1 10Q16 -6 31 10Q16 26 1 10Z" fill="none" stroke="#979797" stroke-width="2.2" /><circle cx="16" cy="10" r="5" fill="none" stroke="#979797" stroke-width="2.2" /><path d="M6 -1L26 21" fill="none" stroke="#f1f1f1" stroke-width="6" /><path d="M6 -1L26 21" fill="none" stroke="#979797" stroke-width="2.2" /></svg><svg style="position:absolute;left:207.60px;top:650.00px;" width="31.00" height="31.00" viewBox="0 0 31 31"><path d="M2 2H29M2 2V29M29 2V16M2 29H16" fill="none" stroke="#6a6a6a" stroke-width="1.4" stroke-dasharray="7 2"/><path d="M9 9H21M9 9V21" fill="none" stroke="#6a6a6a" stroke-width="1.4" /><path d="M21 9A12 12 0 0 1 9 21" fill="none" stroke="#6a6a6a" stroke-width="1.4" /><rect x="0.4" y="0.4" width="3.2" height="3.2" rx="0" fill="#1a8ae0" stroke="none" stroke-width="0" /><rect x="27.4" y="0.4" width="3.2" height="3.2" rx="0" fill="#1a8ae0" stroke="none" stroke-width="0" /><rect x="0.4" y="27.4" width="3.2" height="3.2" rx="0" fill="#1a8ae0" stroke="none" stroke-width="0" /><rect x="7.4" y="7.4" width="3.2" height="3.2" rx="0" fill="#1a8ae0" stroke="none" stroke-width="0" /><rect x="19.4" y="7.4" width="3.2" height="3.2" rx="0" fill="#1a8ae0" stroke="none" stroke-width="0" /><rect x="7.4" y="19.4" width="3.2" height="3.2" rx="0" fill="#1a8ae0" stroke="none" stroke-width="0" /><g transform="translate(23,23) rotate(-45)"><rect x="-7" y="-3.2" width="12" height="6.4" rx="0" fill="#f7b84a" stroke="none" stroke-width="0" /><polygon points="-7,-3.2 -11.5,0 -7,3.2" fill="#6a6a6a" stroke="none" stroke-width="0" /><rect x="5" y="-3.2" width="4" height="6.4" rx="1.5" fill="#e8323c" stroke="none" stroke-width="0" /></g></svg><span class="t " style="left:268.20px;top:656.00px;font-size:21.50px;color:#333;font-weight:400;transform:scaleX(1.0569);">Sketch1</span><div class="" style="position:absolute;left:8.00px;top:1730.20px;width:598.70px;height:47.80px;box-sizing:border-box;background:#f2f2f2;border:1.500px solid #c9c9c9;box-shadow:1.500px 1.500px 0 #cfcfcf"></div><span class="t " style="left:58.40px;top:1743.00px;font-size:22.80px;color:#555;font-weight:400;transform:scaleX(0.9219);">COMMENTS</span><svg style="position:absolute;left:565.00px;top:1744.10px;" width="20.00" height="20.00" viewBox="0 0 20 20"><circle cx="10" cy="10" r="9.5" fill="#333" stroke="none" stroke-width="0" /><rect x="5" y="8.8" width="10" height="2.4" rx="0" fill="#fff" stroke="none" stroke-width="0" /><rect x="8.8" y="5" width="2.4" height="10" rx="0" fill="#fff" stroke="none" stroke-width="0" /></svg><div class="" style="position:absolute;left:0.00px;top:1788.50px;width:2916.00px;height:5.00px;background:#cbcbcb"></div><div class="" style="position:absolute;left:0.00px;top:1793.50px;width:2916.00px;height:96.00px;background:#f2f2f2"></div><svg style="position:absolute;left:2860.00px;top:1746.00px;" width="30.00" height="30.00" viewBox="0 0 30 30"><path d="M15 0.500A14.500 14.500 0 0 1 29.500 15V27Q29.500 29.500 27 29.500H15A14.500 14.500 0 0 1 15 0.500Z" fill="#111" stroke="none" stroke-width="0" /><path d="M7 19L19 10M10 21.500L22 12.500M16 22L23.500 16.500M22 23L23.800 21.700" fill="none" stroke="#fff" stroke-width="1.8" /></svg><svg style="position:absolute;left:2860.00px;top:1827.50px;" width="30.00" height="30.00" viewBox="0 0 30 30"><path d="M25.08 12.05L29.73 12.17L29.73 17.83L25.08 17.95L24.21 20.04L27.42 23.41L23.41 27.42L20.04 24.21L17.95 25.08L17.83 29.73L12.17 29.73L12.05 25.08L9.96 24.21L6.59 27.42L2.58 23.41L5.79 20.04L4.92 17.95L0.27 17.83L0.27 12.17L4.92 12.05L5.79 9.96L2.58 6.59L6.59 2.58L9.96 5.79L12.05 4.92L12.17 0.27L17.83 0.27L17.95 4.92L20.04 5.79L23.41 2.58L27.42 6.59L24.21 9.96Z" fill="#666" stroke="none" stroke-width="0" /><circle cx="15" cy="15" r="5" fill="#f2f2f2" stroke="none" stroke-width="0" /></svg><div class="" style="position:absolute;left:1221.80px;top:1728.00px;width:474.20px;height:47.70px;background:#f0f0f0"></div><svg style="position:absolute;left:1221.80px;top:1728.00px;" width="474.20" height="47.70" viewBox="1221.8 1804 474.2 47.7"><defs><linearGradient id="ng" x1="0" y1="0" x2="0" y2="1"><stop offset="0" stop-color="#f6f7f9"/><stop offset="1" stop-color="#9aa0ae"/></linearGradient><linearGradient id="nm" x1="0" y1="0" x2="1" y2="1"><stop offset="0" stop-color="#ffffff"/><stop offset="1" stop-color="#c8dad8"/></linearGradient><linearGradient id="nb2" x1="0" y1="0" x2="0" y2="1"><stop offset="0" stop-color="#a9c3ea"/><stop offset="1" stop-color="#86a6d8"/></linearGradient></defs><path d="M1244.500 1812.500L1250.500 1820H1247.500V1841.500H1241.500V1820H1238.500Z" fill="url(#ng)" stroke="#3a3d45" stroke-width="1.3" stroke-linejoin="round"/><path d="M1238 1825Q1230 1827 1230.500 1831Q1232 1836 1244 1836.500Q1257 1836 1258.500 1830.500Q1258.500 1827 1251 1825" fill="none" stroke="#3a3d45" stroke-width="1.6" /><polygon points="1233.5,1833.5 1238.5,1830 1238.5,1837.5" fill="#3a3d45" stroke="none" stroke-width="0" /><polygon points="1270,1824.5 1282,1824.5 1276,1831" fill="#222" stroke="none" stroke-width="0" /><polygon points="1298,1822 1311,1812.5 1311,1817 1322,1815.5 1322,1822" fill="#b9bdc8" stroke="#3a3d45" stroke-width="1.2" stroke-linejoin="round"/><rect x="1296.5" y="1821.5" width="27" height="19" rx="1" fill="#eceef2" stroke="#3a3d45" stroke-width="1.5" /><rect x="1300.5" y="1826.5" width="19" height="10" rx="0" fill="url(#ng)" stroke="#3a3d45" stroke-width="1.3" /><path d="M1352 1831Q1347.500 1825.500 1349.500 1824.500Q1352 1824 1356 1830V1816.500Q1357.800 1814 1359.500 1816.500V1826V1813.500Q1361.500 1811.500 1363.500 1813.500V1826V1815Q1365.500 1813 1367.500 1815V1827L1370.500 1818.500Q1372.500 1817.500 1373.500 1819.500L1371 1831Q1370 1838 1366 1842H1356.500Q1354 1837 1352 1831Z" fill="#f4f5f8" stroke="#3a3d45" stroke-width="1.5" stroke-linejoin="round"/><line x1="1416.15" y1="1829.15" x2="1427.15" y2="1840.15" stroke="#2c2f36" stroke-width="4.4" stroke-linecap="round"/><circle cx="1409.5" cy="1822.5" r="9.5" fill="url(#nm)" stroke="#3a3d45" stroke-width="1.6" /><path d="M1424.500 1813.500V1820M1421.300 1816.700H1427.700M1421.300 1822.500H1427.700" fill="none" stroke="#3a3d45" stroke-width="1.3" /><rect x="1451.5" y="1813.5" width="29" height="28" rx="0" fill="none" stroke="#555" stroke-width="1.2" stroke-dasharray="5 2.500"/><line x1="1468.15" y1="1830.15" x2="1479.15" y2="1841.15" stroke="#2c2f36" stroke-width="4.4" stroke-linecap="round"/><circle cx="1461.5" cy="1823.5" r="9.5" fill="url(#nm)" stroke="#3a3d45" stroke-width="1.6" /><polygon points="1492,1824.5 1504,1824.5 1498,1831" fill="#222" stroke="none" stroke-width="0" /><rect x="1517.5" y="1812.5" width="29" height="23" rx="1" fill="#e9ebf0" stroke="#3a3d45" stroke-width="1.5" /><rect x="1520.5" y="1815.5" width="23" height="17" rx="0" fill="url(#nb2)" stroke="#4a5a80" stroke-width="1" /><path d="M1529 1836H1535V1839.500H1540V1841.500H1524V1839.500H1529Z" fill="#d4d7de" stroke="#3a3d45" stroke-width="1.1" /><polygon points="1552,1824.5 1564,1824.5 1558,1831" fill="#222" stroke="none" stroke-width="0" /><rect x="1579.3" y="1813.3" width="28.2" height="27.7" rx="0" fill="url(#ng)" stroke="#3a3d45" stroke-width="1.4" /><path d="M1584 1813.300V1841M1579.300 1817.92H1607.500M1588.7 1813.300V1841M1579.300 1822.54H1607.500M1593.4 1813.300V1841M1579.300 1827.16H1607.500M1598.1 1813.300V1841M1579.300 1831.78H1607.500M1602.8 1813.300V1841M1579.300 1836.4H1607.500" fill="none" stroke="#3f434c" stroke-width="1.1" /><polygon points="1614,1824.5 1626,1824.5 1620,1831" fill="#222" stroke="none" stroke-width="0" /><rect x="1641.5" y="1815" width="28.5" height="24" rx="0" fill="#5b78b4" stroke="#2f4a86" stroke-width="1.3" /><rect x="1644" y="1817.5" width="10.5" height="8" rx="0" fill="url(#nb2)" stroke="#c4d3ee" stroke-width="0.8" /><rect x="1657" y="1817.5" width="10.5" height="8" rx="0" fill="url(#nb2)" stroke="#c4d3ee" stroke-width="0.8" /><rect x="1644" y="1828.5" width="10.5" height="8" rx="0" fill="url(#nb2)" stroke="#c4d3ee" stroke-width="0.8" /><rect x="1657" y="1828.5" width="10.5" height="8" rx="0" fill="url(#nb2)" stroke="#c4d3ee" stroke-width="0.8" /><polygon points="1676.3,1824.5 1688.3,1824.5 1682.3,1831" fill="#222" stroke="none" stroke-width="0" /></svg><svg style="position:absolute;left:0.00px;top:1804.00px;" width="600.00" height="84.00" viewBox="0 1880 600 84"><rect x="24" y="1907.7" width="4.2" height="24" rx="0" fill="#666" stroke="none" stroke-width="0" /><polygon points="46.3,1907.7 46.3,1931.7 29,1919.7" fill="#666" stroke="none" stroke-width="0" /><polygon points="72.7,1919.9 92,1908.2 92,1931.7" fill="#666" stroke="none" stroke-width="0" /><rect x="94.1" y="1916" width="3.8" height="9.8" rx="0" fill="#666" stroke="none" stroke-width="0" /><polygon points="124,1904.5 147.5,1919.2 124,1934" fill="#666" stroke="none" stroke-width="0" /><polygon points="197.5,1919.9 178,1908.2 178,1931.7" fill="#666" stroke="none" stroke-width="0" /><rect x="172" y="1916" width="3.9" height="9.8" rx="0" fill="#666" stroke="none" stroke-width="0" /><polygon points="223.5,1907.7 223.5,1931.7 240.8,1919.7" fill="#666" stroke="none" stroke-width="0" /><rect x="241.7" y="1907.7" width="4.2" height="24" rx="0" fill="#666" stroke="none" stroke-width="0" /><path d="M308 1938V1950.300H453M355.700 1938V1950.300M404.500 1938V1950.300M451.500 1938V1950.300" fill="none" stroke="#c9c9c9" stroke-width="3.2" /><g transform="translate(291.981,1890.33) scale(0.123967)"><polygon points="393,290 530,290 530,320 393,320" fill="#c4c4c4" stroke="none" stroke-width="0" /><polygon points="530,290 575,245 575,278 530,320" fill="#a8a8a8" stroke="none" stroke-width="0" /><polygon points="393,125 438,78 575,78 530,125" fill="#8ccdfa" stroke="none" stroke-width="0" /><polygon points="530,125 575,78 575,233 530,280" fill="#4a95cf" stroke="none" stroke-width="0" /><rect x="393" y="125" width="137" height="155" rx="0" fill="#6ab0e6" stroke="none" stroke-width="0" /><line x1="603" y1="275" x2="603" y2="105" stroke="#222" stroke-width="6" /><polygon points="585,113 603,82 621,113" fill="#222" stroke="none" stroke-width="0" /></g><polygon points="391,1929.5 404.5,1903 404.5,1929.5" fill="#fff" stroke="#8a8a8a" stroke-width="1.6" stroke-linejoin="round"/><polygon points="407,1902 420,1929.5 407,1929.5" fill="#6ab0e6" stroke="#5aa5de" stroke-width="1" stroke-linejoin="round"/><line x1="405.8" y1="1902" x2="405.8" y2="1930" stroke="#c0c0c0" stroke-width="1.2" /><polygon points="439,1929.5 452.5,1903 452.5,1929.5" fill="#fff" stroke="#8a8a8a" stroke-width="1.6" stroke-linejoin="round"/><polygon points="455,1902 468,1929.5 455,1929.5" fill="#6ab0e6" stroke="#5aa5de" stroke-width="1" stroke-linejoin="round"/><line x1="453.8" y1="1902" x2="453.8" y2="1930" stroke="#c0c0c0" stroke-width="1.2" /><polygon points="463.7,1888 488,1888 488,1894 478,1903 473.7,1903 463.7,1894" fill="#666" stroke="none" stroke-width="0" /><rect x="473.6" y="1900" width="4.4" height="51.8" rx="0" fill="#666" stroke="none" stroke-width="0" /></svg><svg style="position:absolute;left:292.00px;top:1823.50px;" width="31.00" height="31.00" viewBox="0 0 31 31"><path d="M2 2H29M2 2V29M29 2V16M2 29H16" fill="none" stroke="#6a6a6a" stroke-width="1.4" stroke-dasharray="7 2"/><path d="M9 9H21M9 9V21" fill="none" stroke="#6a6a6a" stroke-width="1.4" /><path d="M21 9A12 12 0 0 1 9 21" fill="none" stroke="#6a6a6a" stroke-width="1.4" /><rect x="0.4" y="0.4" width="3.2" height="3.2" rx="0" fill="#1a8ae0" stroke="none" stroke-width="0" /><rect x="27.4" y="0.4" width="3.2" height="3.2" rx="0" fill="#1a8ae0" stroke="none" stroke-width="0" /><rect x="0.4" y="27.4" width="3.2" height="3.2" rx="0" fill="#1a8ae0" stroke="none" stroke-width="0" /><rect x="7.4" y="7.4" width="3.2" height="3.2" rx="0" fill="#1a8ae0" stroke="none" stroke-width="0" /><rect x="19.4" y="7.4" width="3.2" height="3.2" rx="0" fill="#1a8ae0" stroke="none" stroke-width="0" /><rect x="7.4" y="19.4" width="3.2" height="3.2" rx="0" fill="#1a8ae0" stroke="none" stroke-width="0" /><g transform="translate(23,23) rotate(-45)"><rect x="-7" y="-3.2" width="12" height="6.4" rx="0" fill="#f7b84a" stroke="none" stroke-width="0" /><polygon points="-7,-3.2 -11.5,0 -7,3.2" fill="#6a6a6a" stroke="none" stroke-width="0" /><rect x="5" y="-3.2" width="4" height="6.4" rx="1.5" fill="#e8323c" stroke="none" stroke-width="0" /></g></svg></div></body></html>
